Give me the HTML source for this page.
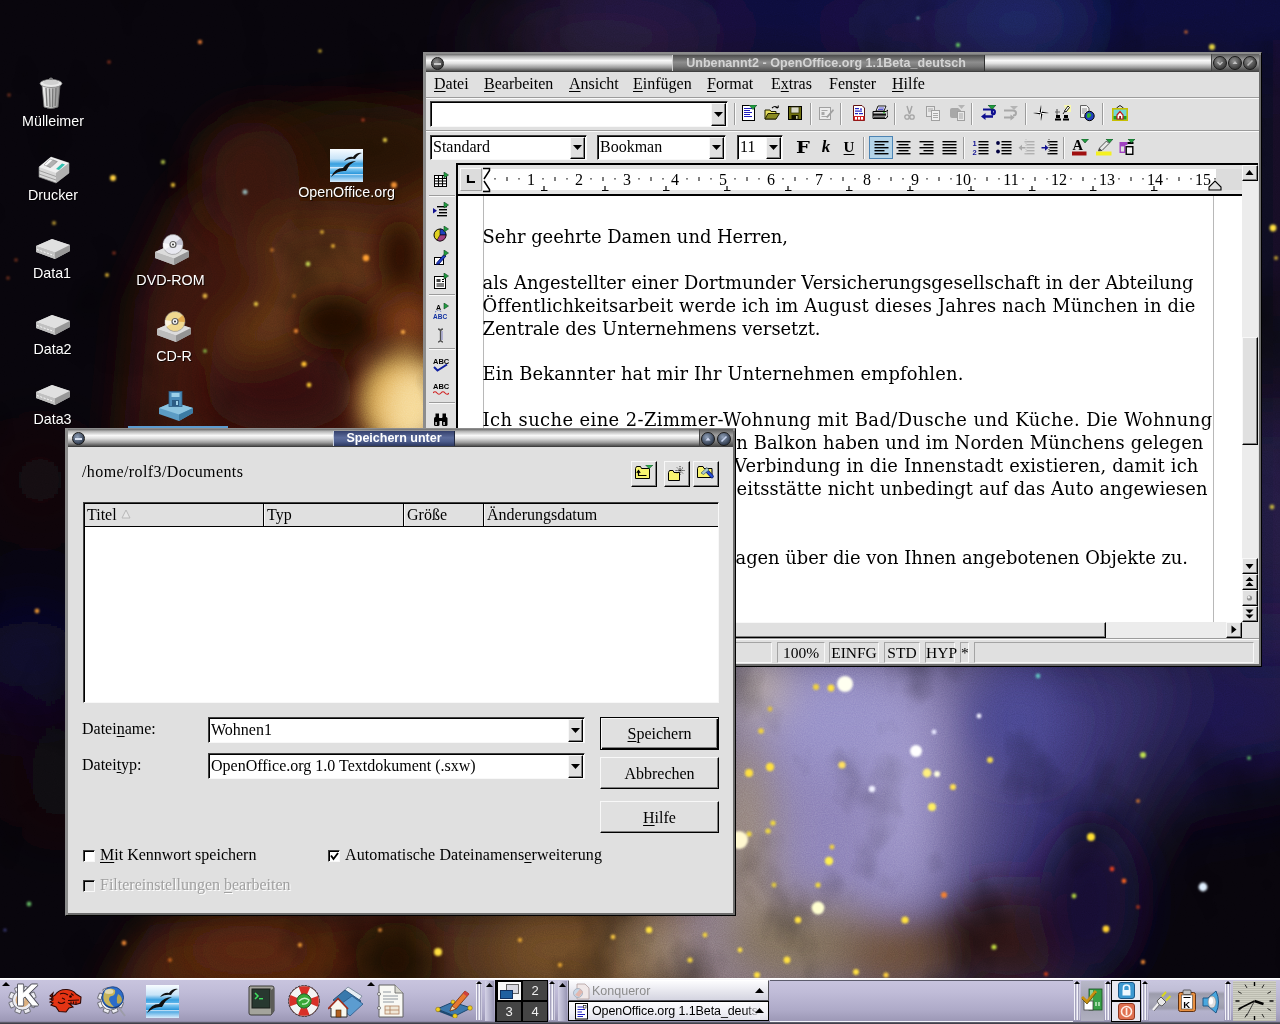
<!DOCTYPE html>
<html lang="de">
<head>
<meta charset="utf-8">
<title>Speichern unter</title>
<style>
*{box-sizing:border-box;margin:0;padding:0}
html,body{width:1280px;height:1024px;overflow:hidden}
body{position:relative;background:#0a0612;font-family:"Liberation Serif",serif;font-size:16px;color:#000}
.abs{position:absolute}
#all{position:absolute;left:0;top:0;width:1280px;height:1024px;overflow:hidden;will-change:transform}
#bg{position:absolute;left:0;top:0;width:1280px;height:1024px;display:block}
.dlabel{position:absolute;color:#fff;font:14.3px "Liberation Sans",sans-serif;white-space:nowrap;text-align:center;transform:translateX(-50%);text-shadow:1px 1px 0 rgba(0,0,0,.7)}
.dicon{position:absolute;display:block}
.win{position:absolute;background:#e0e0e0;border:1px solid;border-color:#8c8c8c #000 #000 #8c8c8c;box-shadow:inset 2px 2px 0 #8c8c8c,inset -2px -2px 0 #6c6c6c}
.tbar{position:absolute;left:2px;right:2px;top:1px;height:18px;background:linear-gradient(#6a6a6a 0,#b8b8b8 14%,#f8f8f8 36%,#e0e0e0 52%,#9a9a9a 76%,#505050 94%,#303030 100%)}
.tbtn{position:absolute;top:2px;width:13px;height:13px;border-radius:50%;background:radial-gradient(circle at 40% 35%,#909090,#444 65%,#202020);border:1px solid #1a1a1a}
.ttitle{position:absolute;top:0;height:18px;font:bold 12.5px "Liberation Sans",sans-serif;color:#fff;text-align:center;line-height:18px;white-space:nowrap}
.sunk{position:absolute;background:#fff;border:1px solid;border-color:#404040 #f8f8f8 #f8f8f8 #404040;box-shadow:inset 1px 1px 0 #000}
.raised{position:absolute;background:#e0e0e0;border:1px solid;border-color:#f8f8f8 #000 #000 #f8f8f8;box-shadow:inset -1px -1px 0 #808080}
.ui{position:absolute;white-space:nowrap;font:16px "Liberation Serif",serif;line-height:18px}
u{text-decoration:underline;text-underline-offset:2px}
.doc{position:absolute;white-space:nowrap;font:17.9px "DejaVu Serif",serif;line-height:23px;color:#000}
.ic{position:absolute;display:block}
</style>
</head>
<body>
<div id="all">
<svg id="bg" width="1280" height="1024" viewBox="0 0 1280 1024">
<defs><filter id="b40" x="-50%" y="-50%" width="200%" height="200%"><feGaussianBlur stdDeviation="40"/></filter><filter id="b22" x="-50%" y="-50%" width="200%" height="200%"><feGaussianBlur stdDeviation="22"/></filter><filter id="b12" x="-50%" y="-50%" width="200%" height="200%"><feGaussianBlur stdDeviation="12"/></filter><filter id="nz" x="0" y="0" width="100%" height="100%"><feTurbulence type="fractalNoise" baseFrequency="0.011 0.008" numOctaves="4" seed="7" result="t"/><feColorMatrix type="matrix" values="0 0 0 0 0.5  0 0 0 0 0.5  0 0 0 0 0.5  1.6 0 0 0 -0.3"/></filter><filter id="nz2" x="0" y="0" width="100%" height="100%"><feTurbulence type="fractalNoise" baseFrequency="0.011 0.008" numOctaves="4" seed="7"/><feColorMatrix type="matrix" values="0 0 0 0 0  0 0 0 0 0  0 0 0 0 0  -2.2 0 0 0 1.0"/></filter><filter id="gr" x="0" y="0" width="100%" height="100%"><feTurbulence type="fractalNoise" baseFrequency="0.9" numOctaves="2" seed="3"/><feColorMatrix type="matrix" values="0 0 0 0 0.5  0 0 0 0 0.5  0 0 0 0 0.5  0 0 0 0.9 -0.25"/></filter><filter id="b1" x="-100%" y="-100%" width="300%" height="300%"><feGaussianBlur stdDeviation="1.3"/></filter></defs>
<rect width="1280" height="1024" fill="#08050c"/>
<g filter="url(#b40)">
<ellipse cx="30" cy="655" rx="60" ry="40" fill="#0c0c44" opacity="1"/>
<ellipse cx="40" cy="480" rx="40" ry="40" fill="#200a0a" opacity="1"/>
<ellipse cx="60" cy="780" rx="40" ry="50" fill="#1c0808" opacity="1"/>
<rect x="560" y="-60" width="800" height="130" fill="#111040"/>
<ellipse cx="600" cy="45" rx="130" ry="26" fill="#3a2648" opacity="1"/>
<ellipse cx="1020" cy="25" rx="60" ry="40" fill="#28307a" opacity="1"/>
<ellipse cx="900" cy="40" rx="80" ry="20" fill="#2a2458" opacity="1"/>
<rect x="1235" y="40" width="90" height="300" fill="#120c2a"/>
<rect x="1235" y="400" width="90" height="300" fill="#2a2052"/>
</g>
<g filter="url(#b22)">
<polygon points="120,470 135,300 180,200 265,135 340,110 470,100 470,470" fill="#3a160a" opacity="1"/>
<polygon points="100,1010 150,925 360,905 470,905 470,1010" fill="#4a220c" opacity="1"/>
<polygon points="430,1010 430,905 800,905 800,1010" fill="#50301a" opacity="1"/>
</g>
<g filter="url(#b22)">
<polygon points="215,335 300,275 470,185 470,250 320,325 240,365" fill="#683a18" opacity="1"/>
<ellipse cx="330" cy="250" rx="80" ry="36" fill="#5a3016" opacity="1"/>
<ellipse cx="330" cy="150" rx="130" ry="50" fill="#1e0c08" opacity="0.7"/>
<ellipse cx="280" cy="390" rx="75" ry="42" fill="#300e08" opacity="1"/>
<ellipse cx="250" cy="180" rx="50" ry="60" fill="#381808" opacity="1"/>
<ellipse cx="395" cy="960" rx="40" ry="40" fill="#1c0a04" opacity="1"/>
<ellipse cx="690" cy="950" rx="100" ry="45" fill="#8e7656" opacity="1"/>
<ellipse cx="560" cy="950" rx="70" ry="40" fill="#6e4c28" opacity="1"/>
<ellipse cx="250" cy="950" rx="70" ry="25" fill="#5a2810" opacity="1"/>
</g>
<g filter="url(#b12)">
<ellipse cx="335" cy="322" rx="38" ry="28" fill="#220a04" opacity="1"/>
<ellipse cx="400" cy="255" rx="22" ry="36" fill="#2c0e05" opacity="1"/>
<ellipse cx="408" cy="322" rx="24" ry="24" fill="#7c3e18" opacity="1"/>
<ellipse cx="404" cy="402" rx="44" ry="48" fill="#e4b458" opacity="1"/>
<ellipse cx="414" cy="410" rx="26" ry="38" fill="#f6da98" opacity="1"/>
</g>
<g filter="url(#b40)">
<polygon points="700,640 1010,640 975,790 945,900 900,1000 700,1000" fill="#8c82b8" opacity="1"/>
<polygon points="975,640 1190,640 1130,800 1060,1000 915,1000 960,800" fill="#3a3474" opacity="1"/>
<polygon points="1190,640 1320,640 1320,770 1160,800" fill="#1a1850" opacity="1"/>
</g>
<g filter="url(#b22)">
<ellipse cx="745" cy="850" rx="30" ry="120" fill="#9a8878" opacity="1"/>
<ellipse cx="760" cy="690" rx="30" ry="30" fill="#c0b098" opacity="1"/>
<ellipse cx="800" cy="945" rx="80" ry="45" fill="#80705c" opacity="1"/>
<ellipse cx="900" cy="955" rx="60" ry="35" fill="#6a4e34" opacity="1"/>
<ellipse cx="905" cy="790" rx="20" ry="110" fill="#a49cd0" opacity="1"/>
<ellipse cx="840" cy="720" rx="70" ry="50" fill="#9690c8" opacity="1"/>
<ellipse cx="1010" cy="940" rx="80" ry="50" fill="#2e1618" opacity="1"/>
<ellipse cx="1090" cy="900" rx="50" ry="80" fill="#181030" opacity="1"/>
<ellipse cx="1020" cy="720" rx="50" ry="50" fill="#4a4690" opacity="1"/>
</g>
<rect width="1280" height="1024" filter="url(#nz2)" opacity=".45"/>
<rect width="1280" height="1024" filter="url(#gr)" style="mix-blend-mode:overlay" opacity=".5"/>
<g filter="url(#b1)">
<circle cx="200" cy="42" r="2.2" fill="#d07030"/>
<circle cx="320" cy="51" r="1.8" fill="#c0a030"/>
<circle cx="109" cy="62" r="1.8" fill="#803020"/>
<circle cx="9" cy="95" r="1.8" fill="#703020"/>
<circle cx="385" cy="140" r="2.2" fill="#d8c040"/>
<circle cx="363" cy="120" r="1.8" fill="#a03820"/>
<circle cx="163" cy="162" r="2.2" fill="#a0b040"/>
<circle cx="113" cy="178" r="3" fill="#ffd040"/>
<circle cx="173" cy="185" r="2.2" fill="#d8b030"/>
<circle cx="245" cy="192" r="2.5" fill="#90b0b0"/>
<circle cx="394" cy="185" r="3" fill="#f09030"/>
<circle cx="54" cy="223" r="2" fill="#b09030"/>
<circle cx="322" cy="232" r="2" fill="#d0a030"/>
<circle cx="333" cy="246" r="2" fill="#e0a830"/>
<circle cx="272" cy="250" r="2" fill="#b06828"/>
<circle cx="366" cy="258" r="3.2" fill="#ffa030"/>
<circle cx="308" cy="264" r="2.4" fill="#c0d050"/>
<circle cx="114" cy="253" r="1.8" fill="#803020"/>
<circle cx="107" cy="275" r="2" fill="#d0a830"/>
<circle cx="205" cy="296" r="2.4" fill="#e0b040"/>
<circle cx="256" cy="304" r="2.2" fill="#e0c040"/>
<circle cx="294" cy="296" r="2" fill="#a06020"/>
<circle cx="296" cy="331" r="2.2" fill="#e08030"/>
<circle cx="403" cy="332" r="2.2" fill="#f0a040"/>
<circle cx="205" cy="351" r="2" fill="#80a840"/>
<circle cx="304" cy="364" r="2.6" fill="#ffc030"/>
<circle cx="309" cy="385" r="2.4" fill="#f0c030"/>
<circle cx="16" cy="260" r="1.8" fill="#703020"/>
<circle cx="8" cy="278" r="1.8" fill="#703020"/>
<circle cx="37" cy="611" r="2.4" fill="#e09030"/>
<circle cx="29" cy="904" r="2.4" fill="#60b060"/>
<circle cx="5" cy="930" r="1.6" fill="#404080"/>
<circle cx="438" cy="952" r="4" fill="#ffe040"/>
<circle cx="649" cy="930" r="3.2" fill="#ffe040"/>
<circle cx="124" cy="943" r="2.4" fill="#e08030"/>
<circle cx="613" cy="937" r="2.4" fill="#f0c040"/>
<circle cx="300" cy="945" r="2.2" fill="#e09030"/>
<circle cx="520" cy="940" r="2.2" fill="#e0a030"/>
<circle cx="560" cy="965" r="2.2" fill="#e0a030"/>
<circle cx="690" cy="960" r="2.6" fill="#f0d040"/>
<circle cx="170" cy="960" r="2" fill="#c06020"/>
<circle cx="380" cy="930" r="2" fill="#d08030"/>
<circle cx="705" cy="935" r="2.4" fill="#f0d040"/>
<circle cx="845" cy="684" r="8" fill="#fffff0"/>
<circle cx="831" cy="688" r="3.4" fill="#ffe040"/>
<circle cx="816" cy="687" r="3" fill="#f0d040"/>
<circle cx="1038" cy="676" r="2.4" fill="#60c0c0"/>
<circle cx="979" cy="716" r="2.4" fill="#f0f0ff"/>
<circle cx="934" cy="732" r="2.4" fill="#e8e8ff"/>
<circle cx="916" cy="751" r="6" fill="#ffffff"/>
<circle cx="927" cy="773" r="4.4" fill="#fff080"/>
<circle cx="937" cy="774" r="3" fill="#ffffe0"/>
<circle cx="990" cy="760" r="3" fill="#f0d850"/>
<circle cx="842" cy="765" r="3.6" fill="#ffe060"/>
<circle cx="770" cy="767" r="4.2" fill="#ffe040"/>
<circle cx="749" cy="773" r="4" fill="#ffe040"/>
<circle cx="761" cy="731" r="2.8" fill="#f0d040"/>
<circle cx="770" cy="709" r="2.4" fill="#e0c040"/>
<circle cx="872" cy="789" r="3.2" fill="#f0f0ff"/>
<circle cx="953" cy="787" r="3" fill="#ffe050"/>
<circle cx="932" cy="807" r="4" fill="#fff060"/>
<circle cx="1143" cy="755" r="3" fill="#c0e050"/>
<circle cx="1249" cy="758" r="2" fill="#50a060"/>
<circle cx="1138" cy="801" r="2" fill="#c07030"/>
<circle cx="1091" cy="837" r="4" fill="#ffe030"/>
<circle cx="1112" cy="869" r="2.4" fill="#e04020"/>
<circle cx="1124" cy="881" r="2.4" fill="#f06020"/>
<circle cx="1203" cy="887" r="4.4" fill="#e0f0ff"/>
<circle cx="1074" cy="896" r="2.4" fill="#b0d040"/>
<circle cx="1106" cy="929" r="3.4" fill="#ffd030"/>
<circle cx="944" cy="895" r="3" fill="#f08030"/>
<circle cx="905" cy="920" r="3.6" fill="#ffe040"/>
<circle cx="818" cy="908" r="6.4" fill="#ffffd0"/>
<circle cx="829" cy="861" r="4.2" fill="#fff050"/>
<circle cx="798" cy="920" r="3.2" fill="#ffe040"/>
<circle cx="787" cy="960" r="3.4" fill="#ffe040"/>
<circle cx="773" cy="823" r="2.6" fill="#f0d840"/>
<circle cx="768" cy="831" r="2.6" fill="#f0d840"/>
<circle cx="749" cy="834" r="2.6" fill="#f0d840"/>
<circle cx="832" cy="847" r="2.4" fill="#f0d040"/>
<circle cx="818" cy="885" r="2.6" fill="#f0d840"/>
<circle cx="774" cy="885" r="2.4" fill="#e0c840"/>
<circle cx="994" cy="947" r="2.6" fill="#c0d840"/>
<circle cx="1143" cy="962" r="2.2" fill="#e08030"/>
<circle cx="1138" cy="907" r="2" fill="#a03020"/>
<circle cx="739" cy="840" r="9" fill="#fff8d0"/>
<circle cx="757" cy="975" r="3" fill="#ffe040"/>
<circle cx="740" cy="950" r="2.4" fill="#ffe040"/>
<circle cx="856" cy="972" r="3" fill="#ffe040"/>
<circle cx="886" cy="975" r="2.6" fill="#ffd040"/>
<circle cx="1046" cy="974" r="2" fill="#d04020"/>
<circle cx="958" cy="45" r="2.2" fill="#60c060"/>
<circle cx="1212" cy="47" r="3" fill="#e0d040"/>
<circle cx="1186" cy="32" r="1.8" fill="#c06030"/>
<circle cx="918" cy="18" r="1.6" fill="#60a0a0"/>
<circle cx="1273" cy="228" r="3.4" fill="#ffe040"/>
<circle cx="1276" cy="258" r="2" fill="#c0a030"/>
<circle cx="1272" cy="507" r="2.4" fill="#c0b040"/>
</g>
</svg>

<svg class="ic" style="left:38px;top:76px" width="26" height="34" viewBox="0 0 26 34"><defs><linearGradient id="tg" x1="0" x2="1"><stop offset="0" stop-color="#f4f4f4"/><stop offset=".5" stop-color="#c4c4c4"/><stop offset="1" stop-color="#8c8c8c"/></linearGradient></defs><path d="M4 9 L6 31 Q13 34 20 31 L22 9 Z" fill="url(#tg)" stroke="#707070" stroke-width=".8"/><path d="M8 12 L9 30 M11.5 12.5 L12 31 M14.8 12.5 L14.5 31 M18 12 L17.2 30" stroke="#787878" stroke-width="1.3"/><ellipse cx="13" cy="7.5" rx="11" ry="4" fill="#e8e8e8" stroke="#808080" stroke-width=".8"/><ellipse cx="13" cy="6.5" rx="8" ry="2.4" fill="#d0d0d0"/><path d="M11 4 Q13 0 15 4" fill="none" stroke="#909090" stroke-width="1.2"/></svg>
<div class="dlabel" style="left:53px;top:112.5px">Mülleimer</div>
<svg class="ic" style="left:37px;top:153px" width="34" height="32" viewBox="0 0 34 32"><path d="M2 14 L14 4 L32 10 L32 20 L19 30 L2 24 Z" fill="#d8d8d8" stroke="#808080" stroke-width=".7"/><path d="M2 14 L19 20 L32 10 L14 4 Z" fill="#f0f0f0"/><path d="M19 20 V30 L32 20 V10 Z" fill="#b0b0b0"/><path d="M2 17.5 L19 23.5 M2 21 L19 27" stroke="#909090" stroke-width=".8"/><path d="M7 12 L13 6 L20 8.5 L14 14.5 Z" fill="#fafafa" stroke="#a0a0a0" stroke-width=".6"/><path d="M9 13 L16 6.5 L21 8.5 L13 15 Z" fill="#808080" opacity=".6"/><path d="M19 16 L25 10.5 L28 11.5 L22 17 Z" fill="#30c0b0"/></svg>
<div class="dlabel" style="left:53px;top:187px">Drucker</div>
<svg class="ic" style="left:35px;top:238px" width="36" height="22" viewBox="0 0 36 22"><path d="M1 8 L17 1 L35 7 L35 13 L20 21 L1 14 Z" fill="#b8b8b8"/><path d="M1 8 L20 14.5 L35 7 L17 1 Z" fill="#e0e0e0"/><path d="M20 14.5 V21 L35 13 V7 Z" fill="#989898"/><path d="M1 8 L20 14.5 V21 L1 14 Z" fill="#c0c0c0"/><path d="M2 11.5 L19 17.5" stroke="#f8f8f8" stroke-width="1" stroke-dasharray="2 1.5"/></svg>
<div class="dlabel" style="left:52px;top:265px">Data1</div>
<svg class="ic" style="left:35px;top:314px" width="36" height="22" viewBox="0 0 36 22"><path d="M1 8 L17 1 L35 7 L35 13 L20 21 L1 14 Z" fill="#b8b8b8"/><path d="M1 8 L20 14.5 L35 7 L17 1 Z" fill="#e0e0e0"/><path d="M20 14.5 V21 L35 13 V7 Z" fill="#989898"/><path d="M1 8 L20 14.5 V21 L1 14 Z" fill="#c0c0c0"/><path d="M2 11.5 L19 17.5" stroke="#f8f8f8" stroke-width="1" stroke-dasharray="2 1.5"/></svg>
<div class="dlabel" style="left:52.5px;top:341px">Data2</div>
<svg class="ic" style="left:35px;top:384px" width="36" height="22" viewBox="0 0 36 22"><path d="M1 8 L17 1 L35 7 L35 13 L20 21 L1 14 Z" fill="#b8b8b8"/><path d="M1 8 L20 14.5 L35 7 L17 1 Z" fill="#e0e0e0"/><path d="M20 14.5 V21 L35 13 V7 Z" fill="#989898"/><path d="M1 8 L20 14.5 V21 L1 14 Z" fill="#c0c0c0"/><path d="M2 11.5 L19 17.5" stroke="#f8f8f8" stroke-width="1" stroke-dasharray="2 1.5"/></svg>
<div class="dlabel" style="left:52.5px;top:410.5px">Data3</div>
<svg class="ic" style="left:154px;top:234px" width="36" height="32" viewBox="0 0 36 32"><path d="M1 18 L17 11 L35 17 L35 23 L20 31 L1 24 Z" fill="#b8b8b8"/><path d="M1 18 L20 24.5 L35 17 L17 11 Z" fill="#dcdcdc"/><path d="M20 24.5 V31 L35 23 V17 Z" fill="#949494"/><path d="M1 18 L20 24.5 V31 L1 24 Z" fill="#bcbcbc"/><ellipse cx="19" cy="10.5" rx="10" ry="10" fill="#e8e8f0" stroke="#909090" stroke-width=".6" transform="rotate(-15 19 10.5)"/><path d="M19 10.5 L27 4 A10 10 0 0 1 29 11 Z" fill="#b8b8c8" opacity=".8"/><path d="M19 10.5 L10 16 A10 10 0 0 1 9 9 Z" fill="#fff" opacity=".7"/><circle cx="19" cy="10.5" r="3" fill="#f8f8f8" stroke="#606060" stroke-width="1.2"/><circle cx="19" cy="10.5" r="1" fill="#303030"/></svg>
<div class="dlabel" style="left:170.5px;top:272px">DVD-ROM</div>
<svg class="ic" style="left:156px;top:311px" width="36" height="32" viewBox="0 0 36 32"><path d="M1 18 L17 11 L35 17 L35 23 L20 31 L1 24 Z" fill="#b8b8b8"/><path d="M1 18 L20 24.5 L35 17 L17 11 Z" fill="#dcdcdc"/><path d="M20 24.5 V31 L35 23 V17 Z" fill="#949494"/><path d="M1 18 L20 24.5 V31 L1 24 Z" fill="#bcbcbc"/><ellipse cx="19" cy="10.5" rx="10" ry="10" fill="#f0d890" stroke="#909090" stroke-width=".6" transform="rotate(-15 19 10.5)"/><path d="M19 10.5 L27 4 A10 10 0 0 1 29 11 Z" fill="#e0a040" opacity=".8"/><path d="M19 10.5 L10 16 A10 10 0 0 1 9 9 Z" fill="#fff" opacity=".7"/><circle cx="19" cy="10.5" r="3" fill="#f8f8f8" stroke="#606060" stroke-width="1.2"/><circle cx="19" cy="10.5" r="1" fill="#303030"/></svg>
<div class="dlabel" style="left:174px;top:348px">CD-R</div>
<svg class="ic" style="left:158px;top:390px" width="36" height="32" viewBox="0 0 36 32"><path d="M1 18 L15 12 L35 18 L35 23 L21 31 L1 24 Z" fill="#5c9cc4"/><path d="M1 18 L21 24.5 L35 18 L15 12 Z" fill="#8cc4e0"/><path d="M21 24.5 V31 L35 23 V18 Z" fill="#3c7ca4"/><rect x="11" y="1.5" width="13" height="15" fill="#4c8cb8" stroke="#2c5c84" stroke-width=".8"/><rect x="13.5" y="3" width="8" height="4" fill="#9cd0e8"/><rect x="14" y="10" width="7" height="6" fill="#2c5c84"/><rect x="18" y="11" width="2" height="4" fill="#9cd0e8"/></svg>
<div class="abs" style="left:128px;top:426px;width:100px;height:3px;background:#5c9cd0"></div>
<svg class="ic" style="left:330px;top:149px" width="33" height="33" viewBox="0 0 33 33"><defs><linearGradient id="og" x1="0" y1="0" x2="0" y2="1"><stop offset="0" stop-color="#f8fcff"/><stop offset=".3" stop-color="#c8e4f8"/><stop offset=".45" stop-color="#38a0e0"/><stop offset=".62" stop-color="#78c4f0"/><stop offset=".75" stop-color="#2c98dc"/><stop offset="1" stop-color="#d8ecfc"/></linearGradient></defs><rect width="33" height="33" fill="url(#og)"/><rect y="18" width="33" height="1.5" fill="#e8f4ff" opacity=".8"/><rect y="25" width="33" height="1.2" fill="#e8f4ff" opacity=".7"/><path d="M14 12 Q18 7 23 8 Q27 3 32 4 Q28 5 25 10 Q20 9 14 12 Z" fill="#101010"/><path d="M1 28 Q5 19 13 19 Q18 12 26 12 Q20 14 16 22 Q8 21 1 28 Z" fill="#101010"/></svg>
<div class="dlabel" style="left:346.5px;top:184px">OpenOffice.org</div>
<div class="win" style="left:423px;top:52px;width:839px;height:615px"></div>
<div class="tbar" style="left:426px;top:54px;width:833px;right:auto"></div>
<div class="tbtn" style="left:431px;top:57px"></div><div class="abs" style="left:434px;top:63px;width:7px;height:2px;background:#c8c8c8"></div>
<div class="ttitle" style="left:672px;top:55px;width:313px;height:16px;line-height:16px;padding-right:5px;letter-spacing:.06px;background:linear-gradient(#4c4c4c,#8e8e8e 45%,#7a7a7a 70%,#505050);color:#d4d4d4;border-left:1px solid #d0d0d0;border-right:1px solid #303030;font-size:12.5px">Unbenannt2 - OpenOffice.org 1.1Beta_deutsch</div>
<div class="abs" style="left:1211px;top:54px;width:48px;height:18px;background:linear-gradient(#5a5a5a,#a0a0a0 35%,#8a8a8a 60%,#404040);border-left:1px solid #444"></div>
<div class="tbtn" style="left:1213px;top:56px;width:14px;height:14px"></div>
<div class="tbtn" style="left:1228px;top:56px;width:14px;height:14px"></div>
<div class="tbtn" style="left:1243px;top:56px;width:14px;height:14px"></div>
<svg class="ic" style="left:1213px;top:56px" width="14" height="14" viewBox="0 0 14 14"><path d="M4.5 6 L7 8.5 L9.5 6" fill="none" stroke="#c0c0c0" stroke-width="1.4"/></svg>
<svg class="ic" style="left:1228px;top:56px" width="14" height="14" viewBox="0 0 14 14"><path d="M4.5 8 L7 5 L9.5 8 Z" fill="#c0c0c0"/></svg>
<svg class="ic" style="left:1243px;top:56px" width="14" height="14" viewBox="0 0 14 14"><path d="M4.5 9.5 L9.5 4.5" fill="none" stroke="#b8b8b8" stroke-width="1.6"/></svg>
<div class="ui" style="left:434px;top:75px"><u>D</u>atei</div>
<div class="ui" style="left:484px;top:75px"><u>B</u>earbeiten</div>
<div class="ui" style="left:569px;top:75px"><u>A</u>nsicht</div>
<div class="ui" style="left:633px;top:75px"><u>E</u>infügen</div>
<div class="ui" style="left:707px;top:75px"><u>F</u>ormat</div>
<div class="ui" style="left:771px;top:75px">E<u>x</u>tras</div>
<div class="ui" style="left:829px;top:75px">Fen<u>s</u>ter</div>
<div class="ui" style="left:892px;top:75px"><u>H</u>ilfe</div>
<div class="abs" style="left:426px;top:97px;width:833px;height:2px;border-top:1px solid #9c9c9c;border-bottom:1px solid #fafafa"></div>
<div class="abs" style="left:426px;top:130px;width:833px;height:2px;border-top:1px solid #9c9c9c;border-bottom:1px solid #fafafa"></div>
<div class="sunk" style="left:430px;top:101px;width:298px;height:26px"></div>
<div class="raised" style="left:711px;top:103px;width:15px;height:23px"></div>
<svg class="ic" style="left:714px;top:112px" width="9" height="5" viewBox="0 0 9 5"><path d="M0 0 H9 L4.5 5 Z" fill="#000"/></svg>
<div class="sunk" style="left:430px;top:135px;width:157px;height:25px"></div>
<div class="raised" style="left:570px;top:137px;width:15px;height:22px"></div>
<svg class="ic" style="left:573px;top:145px" width="9" height="5" viewBox="0 0 9 5"><path d="M0 0 H9 L4.5 5 Z" fill="#000"/></svg>
<div class="ui" style="left:433px;top:138px;font-size:16px">Standard</div>
<div class="sunk" style="left:597px;top:135px;width:129px;height:25px"></div>
<div class="raised" style="left:709px;top:137px;width:15px;height:22px"></div>
<svg class="ic" style="left:712px;top:145px" width="9" height="5" viewBox="0 0 9 5"><path d="M0 0 H9 L4.5 5 Z" fill="#000"/></svg>
<div class="ui" style="left:600px;top:138px;font-size:16px">Bookman</div>
<div class="sunk" style="left:737px;top:135px;width:46px;height:25px"></div>
<div class="raised" style="left:766px;top:137px;width:15px;height:22px"></div>
<svg class="ic" style="left:769px;top:145px" width="9" height="5" viewBox="0 0 9 5"><path d="M0 0 H9 L4.5 5 Z" fill="#000"/></svg>
<div class="ui" style="left:740px;top:138px;font-size:16px">11</div>
<div class="abs" style="left:734px;top:103px;width:2px;height:22px;border-left:1px solid #9c9c9c;border-right:1px solid #fafafa"></div>
<div class="abs" style="left:810px;top:103px;width:2px;height:22px;border-left:1px solid #9c9c9c;border-right:1px solid #fafafa"></div>
<div class="abs" style="left:840px;top:103px;width:2px;height:22px;border-left:1px solid #9c9c9c;border-right:1px solid #fafafa"></div>
<div class="abs" style="left:894px;top:103px;width:2px;height:22px;border-left:1px solid #9c9c9c;border-right:1px solid #fafafa"></div>
<div class="abs" style="left:971px;top:103px;width:2px;height:22px;border-left:1px solid #9c9c9c;border-right:1px solid #fafafa"></div>
<div class="abs" style="left:1025px;top:103px;width:2px;height:22px;border-left:1px solid #9c9c9c;border-right:1px solid #fafafa"></div>
<div class="abs" style="left:1102px;top:103px;width:2px;height:22px;border-left:1px solid #9c9c9c;border-right:1px solid #fafafa"></div>
<div class="abs" style="left:863px;top:137px;width:2px;height:22px;border-left:1px solid #9c9c9c;border-right:1px solid #fafafa"></div>
<div class="abs" style="left:963px;top:137px;width:2px;height:22px;border-left:1px solid #9c9c9c;border-right:1px solid #fafafa"></div>
<div class="abs" style="left:1063px;top:137px;width:2px;height:22px;border-left:1px solid #9c9c9c;border-right:1px solid #fafafa"></div>
<svg class="ic" style="left:741px;top:105px" width="16" height="17" viewBox="0 0 16 17"><rect x="1.5" y="0.5" width="12" height="15" fill="#fff" stroke="#000"/><rect x="3" y="3" width="8" height="1" fill="#2020c0"/><rect x="3" y="5" width="6" height="1" fill="#2020c0"/><rect x="3" y="7" width="8" height="1" fill="#2020c0"/><rect x="3" y="9" width="6" height="1" fill="#2020c0"/><rect x="3" y="11" width="8" height="1" fill="#2020c0"/><path d="M8 0 H16 L12 4.5 Z" fill="#20a040" stroke="#104020" stroke-width=".6"/></svg>
<svg class="ic" style="left:764px;top:105px" width="16" height="17" viewBox="0 0 16 17"><path d="M1 5 H6 L7 6.5 H12 V14 H1 Z" fill="#e8e060" stroke="#202000" stroke-width="1"/><path d="M1 14 L4 8.5 H15.5 L12 14 Z" fill="#8a8a20" stroke="#202000"/><path d="M8 3 Q11 0 14 3 M14 3 l-2.5 -.5 M14 3 l.3 -2.5" fill="none" stroke="#000" stroke-width="1.1"/></svg>
<svg class="ic" style="left:787px;top:105px" width="16" height="17" viewBox="0 0 16 17"><rect x="1.5" y="1.5" width="13" height="13" fill="#707010" stroke="#000"/><rect x="4" y="2" width="8" height="6" fill="#d8d8c8" stroke="#303000" stroke-width=".7"/><rect x="4.5" y="10" width="7" height="4.5" fill="#101000"/><rect x="9" y="11" width="1.6" height="2.8" fill="#d0d0a0"/></svg>
<svg class="ic" style="left:818px;top:105px" width="16" height="17" viewBox="0 0 16 17"><rect x="1.5" y="2.5" width="11" height="12" fill="#ececec" stroke="#a0a0a0"/><rect x="3.5" y="5" width="6" height="1" fill="#a8a8a8"/><rect x="3.5" y="7" width="3" height="3" fill="#a8a8a8"/><rect x="3.5" y="11" width="6" height="1" fill="#a8a8a8"/><path d="M8 12 L15 4 L16 5.5 L9.5 13 Z" fill="#a0a0a0"/></svg>
<svg class="ic" style="left:851px;top:105px" width="16" height="17" viewBox="0 0 16 17"><path d="M2.5 .5 H11 L13.5 3 V15.5 H2.5 Z" fill="#fff" stroke="#601010"/><rect x="2.5" y="11" width="11" height="4.5" fill="#d02020"/><rect x="4" y="3" width="4" height="1.2" fill="#2020c0"/><rect x="9" y="3.5" width="2" height="1.2" fill="#2020c0"/><rect x="4" y="5.5" width="7" height="1.2" fill="#2020c0"/><rect x="4" y="8" width="3" height="1.2" fill="#2020c0"/><rect x="8" y="8" width="4" height="1.2" fill="#2020c0"/><rect x="4" y="12" width="2" height="2.6" fill="#fff"/><rect x="7" y="12" width="2" height="2.6" fill="#fff"/><rect x="10" y="12" width="2" height="2.6" fill="#fff"/></svg>
<svg class="ic" style="left:872px;top:105px" width="16" height="17" viewBox="0 0 16 17"><path d="M4 6 L6 1 H14 L12 6 Z" fill="#fff" stroke="#000" stroke-width=".9"/><path d="M6.5 3 H12 M6 4.6 H11.5" stroke="#3030c0" stroke-width=".9"/><path d="M1 6.5 H14 L16 5 V11 L14 13.5 H1 Z" fill="#d0d0d0" stroke="#000"/><rect x="1" y="8.5" width="13" height="2.2" fill="#101010"/><rect x="2" y="11.5" width="11" height="1.6" fill="#404040"/><circle cx="12" cy="7.6" r=".8" fill="#20c020"/></svg>
<svg class="ic" style="left:901px;top:105px" width="16" height="17" viewBox="0 0 16 17"><path d="M6 1 L8.5 9 M11 1 L8.5 9" stroke="#a4a4a4" stroke-width="1.4" fill="none"/><circle cx="6" cy="12" r="2.2" fill="none" stroke="#a4a4a4" stroke-width="1.3"/><circle cx="11" cy="12" r="2.2" fill="none" stroke="#a4a4a4" stroke-width="1.3"/></svg>
<svg class="ic" style="left:925px;top:105px" width="16" height="17" viewBox="0 0 16 17"><rect x="1.5" y="1.5" width="8" height="10" fill="#e8e8e8" stroke="#a0a0a0"/><rect x="6.5" y="5.5" width="8" height="10" fill="#f0f0f0" stroke="#a0a0a0"/><path d="M3 4 H8 M3 6 H6 M8 8.5 H13 M8 10.5 H13 M8 12.5 H13" stroke="#a8a8a8"/></svg>
<svg class="ic" style="left:949px;top:105px" width="16" height="17" viewBox="0 0 16 17"><path d="M1 5 Q1 3 3 3 H9 L12 5.5 V13 H3 Q1 13 1 11 Z" fill="#a8a8a8"/><rect x="8.5" y="6.5" width="7" height="9" fill="#e8e8e8" stroke="#a0a0a0"/><path d="M10 9 H14 M10 11 H14 M10 13 H14" stroke="#a8a8a8"/><path d="M9 0 H16 L12.5 4 Z" fill="#b4b4b4"/></svg>
<svg class="ic" style="left:980px;top:105px" width="16" height="17" viewBox="0 0 16 17"><path d="M3 4.5 H12 V8.5 H15 M3 4.5 H11" fill="none" stroke="#101090" stroke-width="2.2"/><path d="M12 4.5 Q15 4.5 15 7 Q15 9.5 12 9.5" fill="none" stroke="#101090" stroke-width="2"/><path d="M1 11.5 L5.5 8 V10.3 H13 V12.7 H5.5 V15 Z" fill="#101090"/><path d="M8 0 H16 L12 4.5 Z" fill="#20a040" stroke="#104020" stroke-width=".6"/></svg>
<svg class="ic" style="left:1002px;top:105px" width="16" height="17" viewBox="0 0 16 17"><path d="M2 5.5 H11 Q14 5.5 14 8 Q14 10.5 11 10.5" fill="none" stroke="#a8a8a8" stroke-width="2"/><path d="M12.5 12.5 L8.5 9.5 V11.5 H2 V13.5 H8.5 V15.5 Z" fill="#a8a8a8"/><path d="M8 1 H16 L12 5 Z" fill="#b4b4b4"/></svg>
<svg class="ic" style="left:1033px;top:105px" width="16" height="17" viewBox="0 0 16 17"><path d="M8 0 L9.3 6.7 L16 8 L9.3 9.3 L8 16 L6.7 9.3 L0 8 L6.7 6.7 Z" fill="#000"/><path d="M8 0 L8 8 L9.3 6.7Z M16 8 L8 8 L9.3 9.3Z M8 16 L8 8 L6.7 9.3Z M0 8 L8 8 L6.7 6.7Z" fill="#fff"/></svg>
<svg class="ic" style="left:1055px;top:105px" width="16" height="17" viewBox="0 0 16 17"><path d="M9 0 H16 V7 H11 Z" fill="#f8f8b0"/><path d="M9.5 6 L13 1 L14.5 2.5 L11 7 Z M8 9 L10 6" fill="#fff" stroke="#000" stroke-width=".9"/><path d="M2 4 V10 M-1 7 H5" stroke="#606060" stroke-width="1.2"/><rect x="1" y="10" width="4" height="3" fill="#000"/><rect x="0" y="13.5" width="6" height="2" fill="#000"/><rect x="9" y="10" width="4" height="3" fill="#000"/><rect x="8" y="13.5" width="6" height="2" fill="#000"/></svg>
<svg class="ic" style="left:1079px;top:105px" width="16" height="17" viewBox="0 0 16 17"><path d="M1.5 .5 H7.5 L10 3 V12.5 H1.5 Z" fill="#f4f4f4" stroke="#606060"/><path d="M3 4 H8 M3 6 H8 M3 8 H6" stroke="#909090"/><circle cx="10.5" cy="11" r="4.7" fill="#2040c0" stroke="#000"/><path d="M8 9 Q10 7 12 9 Q13 11 11 12 Q9 14 8 12 Z" fill="#30b030"/></svg>
<svg class="ic" style="left:1112px;top:105px" width="16" height="17" viewBox="0 0 16 17"><path d="M4.5 3 L8 .5 L11.5 3" fill="none" stroke="#000" stroke-width=".9"/><rect x=".8" y="3.8" width="14.4" height="11.4" fill="#70d8d8" stroke="#c8c000" stroke-width="1.6"/><rect x="1.6" y="11" width="12.8" height="3.4" fill="#20a020"/><path d="M5 10 L8 6.5 L11 10 V14 H5 Z" fill="#fff" stroke="#c02020" stroke-width="1.2"/><rect x="7.2" y="11" width="1.8" height="3" fill="#802020"/></svg>
<div class="abs" style="left:795px;top:137px;width:16px;font:900 17px 'DejaVu Serif',serif;line-height:20px;text-align:center;transform:scaleX(1.15)">F</div>
<div class="abs" style="left:818px;top:137px;width:16px;font:italic bold 17px 'Liberation Serif',serif;line-height:20px;text-align:center">k</div>
<div class="abs" style="left:841px;top:137px;width:16px;font:bold 15px 'Liberation Serif',serif;line-height:20px;text-align:center;text-decoration:underline;text-underline-offset:2px">U</div>
<div class="abs" style="left:869px;top:136px;width:24px;height:23px;background:#b4d4e8;border:1px solid #4c84b4"></div>
<svg class="ic" style="left:873px;top:139px" width="17" height="17" viewBox="-0.5 0 17 17"><rect x="1" y="2" width="14" height="1.4" fill="#000"/><rect x="1" y="5" width="10" height="1.4" fill="#000"/><rect x="1" y="8" width="14" height="1.4" fill="#000"/><rect x="1" y="11" width="10" height="1.4" fill="#000"/><rect x="1" y="14" width="14" height="1.4" fill="#000"/></svg>
<svg class="ic" style="left:895px;top:139px" width="17" height="17" viewBox="-0.5 0 17 17"><rect x="1" y="2" width="14" height="1.4" fill="#000"/><rect x="3" y="5" width="10" height="1.4" fill="#000"/><rect x="1" y="8" width="14" height="1.4" fill="#000"/><rect x="3" y="11" width="10" height="1.4" fill="#000"/><rect x="1" y="14" width="14" height="1.4" fill="#000"/></svg>
<svg class="ic" style="left:918px;top:139px" width="17" height="17" viewBox="-0.5 0 17 17"><rect x="1" y="2" width="14" height="1.4" fill="#000"/><rect x="5" y="5" width="10" height="1.4" fill="#000"/><rect x="1" y="8" width="14" height="1.4" fill="#000"/><rect x="5" y="11" width="10" height="1.4" fill="#000"/><rect x="1" y="14" width="14" height="1.4" fill="#000"/></svg>
<svg class="ic" style="left:941px;top:139px" width="17" height="17" viewBox="-0.5 0 17 17"><rect x="1" y="2" width="14" height="1.4" fill="#000"/><rect x="1" y="5" width="14" height="1.4" fill="#000"/><rect x="1" y="8" width="14" height="1.4" fill="#000"/><rect x="1" y="11" width="14" height="1.4" fill="#000"/><rect x="1" y="14" width="14" height="1.4" fill="#000"/></svg>
<svg class="ic" style="left:972px;top:139px" width="17" height="17" viewBox="-0.5 0 17 17"><rect x="6" y="2" width="10" height="1.4" fill="#000"/><rect x="6" y="5" width="10" height="1.4" fill="#000"/><rect x="6" y="8" width="10" height="1.4" fill="#000"/><rect x="6" y="11" width="10" height="1.4" fill="#000"/><rect x="6" y="14" width="10" height="1.4" fill="#000"/><text x="0" y="7" font-family="Liberation Sans" font-weight="bold" font-size="7.5" fill="#101090">1</text><text x="0" y="15.5" font-family="Liberation Sans" font-weight="bold" font-size="7.5" fill="#101090">2</text></svg>
<svg class="ic" style="left:995px;top:139px" width="17" height="17" viewBox="-0.5 0 17 17"><rect x="6" y="2" width="10" height="1.4" fill="#000"/><rect x="6" y="5" width="10" height="1.4" fill="#000"/><rect x="6" y="8" width="10" height="1.4" fill="#000"/><rect x="6" y="11" width="10" height="1.4" fill="#000"/><rect x="6" y="14" width="10" height="1.4" fill="#000"/><circle cx="2.5" cy="4" r="1.9" fill="#000040"/><circle cx="2.5" cy="12.5" r="1.9" fill="#000040"/></svg>
<svg class="ic" style="left:1018px;top:139px" width="17" height="17" viewBox="-0.5 0 17 17"><rect x="6" y="2" width="10" height="1.4" fill="#b0b0b0"/><rect x="8" y="5" width="8" height="1.4" fill="#b0b0b0"/><rect x="8" y="8" width="8" height="1.4" fill="#b0b0b0"/><rect x="8" y="11" width="8" height="1.4" fill="#b0b0b0"/><rect x="6" y="14" width="10" height="1.4" fill="#b0b0b0"/><path d="M0 8.7 L3.5 5.7 V7.9 H7 V9.5 H3.5 V11.7 Z" fill="#a8a8a8"/><path d="M7.5 0 V16" stroke="#c0c0c0" stroke-dasharray="1 1"/></svg>
<svg class="ic" style="left:1041px;top:139px" width="17" height="17" viewBox="-0.5 0 17 17"><rect x="6" y="2" width="10" height="1.4" fill="#000"/><rect x="8" y="5" width="8" height="1.4" fill="#000"/><rect x="8" y="8" width="8" height="1.4" fill="#000"/><rect x="8" y="11" width="8" height="1.4" fill="#000"/><rect x="6" y="14" width="10" height="1.4" fill="#000"/><path d="M7 8.7 L3.5 5.7 V7.9 H0 V9.5 H3.5 V11.7 Z" fill="#101090"/><path d="M7.5 0 V16" stroke="#404040" stroke-dasharray="1 1"/></svg>
<svg class="ic" style="left:1072px;top:139px" width="17" height="17" viewBox="-0.5 0 17 17"><text x="0" y="11" font-family="Liberation Serif" font-weight="bold" font-size="14.5" fill="#000">A</text><rect x="-1" y="12.5" width="15" height="4" fill="#a01010"/><path d="M9 0 H16 L12.5 4 Z" fill="#20a040" stroke="#104020" stroke-width=".6"/></svg>
<svg class="ic" style="left:1096px;top:139px" width="17" height="17" viewBox="-0.5 0 17 17"><path d="M3 9 L10 2 L12.5 4.5 L5.5 11.5 L2 12 Z" fill="#e8e8e8" stroke="#404040" stroke-width=".9"/><path d="M3 9 L5.5 11.5 L2 12Z" fill="#404040"/><rect x="-1" y="12.5" width="16" height="4" fill="#f4f020"/><path d="M9.5 0 H16.5 L13 4 Z" fill="#20a040" stroke="#104020" stroke-width=".6"/></svg>
<svg class="ic" style="left:1118px;top:139px" width="17" height="17" viewBox="-0.5 0 17 17"><rect x="1" y="3" width="8" height="3" fill="#a040c0"/><rect x="1.7" y="6.7" width="4.6" height="6.6" fill="#e0e0e0" stroke="#a040c0" stroke-width="1.4"/><rect x="7.7" y="7.7" width="6.6" height="7.6" fill="#f4f4f4" stroke="#000" stroke-width="1.4"/><rect x="9" y="3" width="6" height="2" fill="#000"/><path d="M9.5 0 H16.5 L13 4 Z" fill="#20a040" stroke="#104020" stroke-width=".6"/></svg>
<div class="abs" style="left:429px;top:195px;width:26px;height:2px;border-top:1px solid #9c9c9c;border-bottom:1px solid #fafafa"></div>
<div class="abs" style="left:429px;top:294px;width:26px;height:2px;border-top:1px solid #9c9c9c;border-bottom:1px solid #fafafa"></div>
<div class="abs" style="left:429px;top:348px;width:26px;height:2px;border-top:1px solid #9c9c9c;border-bottom:1px solid #fafafa"></div>
<div class="abs" style="left:429px;top:402px;width:26px;height:2px;border-top:1px solid #9c9c9c;border-bottom:1px solid #fafafa"></div>
<svg class="ic" style="left:433px;top:172px" width="16" height="17" viewBox="0 0 16 17"><rect x="1.5" y="3.5" width="12" height="11" fill="#fff" stroke="#000"/><path d="M1.5 6.5 H13.5 M1.5 9 H13.5 M1.5 11.7 H13.5 M5.5 3.5 V14.5 M9.5 3.5 V14.5" stroke="#000" stroke-width="1.1"/><path d="M11 0 L15.5 3 L11 6 Z" fill="#20a040" stroke="#104020" stroke-width=".6"/></svg>
<svg class="ic" style="left:433px;top:202px" width="16" height="17" viewBox="0 0 16 17"><rect x="4" y="4" width="10" height="1.4" fill="#000"/><rect x="6" y="7" width="8" height="1.4" fill="#000"/><rect x="6" y="10" width="8" height="1.4" fill="#000"/><rect x="4" y="13" width="10" height="1.4" fill="#000"/><path d="M0 6 L4 8.7 L0 11.5 Z" fill="#101090"/><path d="M11 0 L15.5 3 L11 6 Z" fill="#20a040" stroke="#104020" stroke-width=".6"/></svg>
<svg class="ic" style="left:433px;top:226px" width="16" height="17" viewBox="0 0 16 17"><circle cx="7" cy="9" r="6" fill="#e0d020" stroke="#000"/><path d="M7 9 L7 3 A6 6 0 0 1 13 9 Z" fill="#2040c0" stroke="#000" stroke-width=".6"/><path d="M7 9 L13 9 A6 6 0 0 1 4 14.2 Z" fill="#a04080" stroke="#000" stroke-width=".6"/><path d="M11 0 L15.5 3 L11 6 Z" fill="#20a040" stroke="#104020" stroke-width=".6"/></svg>
<svg class="ic" style="left:433px;top:250px" width="16" height="17" viewBox="0 0 16 17"><rect x="1.5" y="7.5" width="9" height="7" fill="#fff" stroke="#000"/><path d="M4 12.5 L11 4.5 L13 6 L6 14 L3.5 14.5 Z" fill="#2040c0" stroke="#000060" stroke-width=".8"/><path d="M11 0 L15.5 3 L11 6 Z" fill="#20a040" stroke="#104020" stroke-width=".6"/></svg>
<svg class="ic" style="left:433px;top:273px" width="16" height="17" viewBox="0 0 16 17"><rect x="1.5" y="3.5" width="11" height="12" fill="#fff" stroke="#000"/><rect x="3.5" y="6" width="4" height="3" fill="#404040"/><path d="M9 6.5 H11 M9 8.5 H11 M3.5 11 H11 M3.5 13 H11" stroke="#000"/><path d="M11 0 L15.5 3 L11 6 Z" fill="#20a040" stroke="#104020" stroke-width=".6"/></svg>
<svg class="ic" style="left:433px;top:303px" width="16" height="17" viewBox="0 0 16 17"><text x="3" y="7" font-family="Liberation Sans" font-weight="bold" font-size="7" fill="#000">A</text><text x="0" y="15.5" font-family="Liberation Sans" font-weight="bold" font-size="6.5" fill="#1030a0">ABC</text><path d="M2 9 L5.5 7 L9 9" fill="none" stroke="#1030a0" stroke-width=".7" stroke-dasharray="1 1"/><path d="M11 0 L15.5 3 L11 6 Z" fill="#20a040" stroke="#104020" stroke-width=".6"/></svg>
<svg class="ic" style="left:433px;top:327px" width="16" height="17" viewBox="0 0 16 17"><path d="M5 2 Q7 2 7.5 4 Q8 2 10 2 M5 15 Q7 15 7.5 13 Q8 15 10 15 M7.5 4 V13" fill="none" stroke="#505050" stroke-width="1.3"/><path d="M9 4 V13" stroke="#8080c0" stroke-width="1"/></svg>
<svg class="ic" style="left:433px;top:356px" width="16" height="17" viewBox="0 0 16 17"><text x="0" y="7.5" font-family="Liberation Sans" font-weight="bold" font-size="7.5" fill="#000">ABC</text><path d="M1 11 L4.5 14.5 L14 8.5" fill="none" stroke="#1020a0" stroke-width="2"/></svg>
<svg class="ic" style="left:433px;top:380px" width="16" height="17" viewBox="0 0 16 17"><text x="0" y="8.5" font-family="Liberation Sans" font-weight="bold" font-size="7.5" fill="#000">ABC</text><path d="M0 13 Q2 10.5 4 13 T8 13 T12 13 T16 13" fill="none" stroke="#d02020" stroke-width="1.2"/></svg>
<svg class="ic" style="left:433px;top:411px" width="16" height="17" viewBox="0 0 16 17"><rect x="1" y="6" width="5.5" height="9" rx="1.5" fill="#000"/><rect x="9" y="6" width="5.5" height="9" rx="1.5" fill="#000"/><rect x="2.5" y="2.5" width="3.5" height="5" fill="#000"/><rect x="9.5" y="2.5" width="3.5" height="5" fill="#000"/><rect x="6" y="7" width="4" height="3" fill="#000"/><rect x="2.3" y="11" width="1.6" height="3" fill="#c0c0c0"/><rect x="10.3" y="11" width="1.6" height="3" fill="#c0c0c0"/></svg>
<div class="abs" style="left:456px;top:163px;width:802px;height:2px;background:#000"></div>
<div class="abs" style="left:456px;top:165px;width:2px;height:457px;background:#000"></div>
<div class="abs" style="left:458px;top:165px;width:784px;height:29px;background:#e4e4e4"></div>
<div class="abs" style="left:458px;top:194px;width:784px;height:2px;background:#000"></div>
<div class="abs" style="left:483px;top:169px;width:733px;height:21px;background:#fff"></div>
<div class="abs" style="left:1216px;top:169px;width:26px;height:21px;background:#dcdcdc"></div>
<div class="abs" style="left:460px;top:168px;width:22px;height:23px;background:#dcdcdc;border:1px solid;border-color:#f8f8f8 #a0a0a0 #a0a0a0 #f8f8f8"></div>
<svg class="ic" style="left:466px;top:173px" width="10" height="12" viewBox="0 0 10 12"><path d="M2 2 V9 H9" fill="none" stroke="#000" stroke-width="2.2"/></svg>
<svg class="ic" style="left:482px;top:167px" width="10" height="26" viewBox="0 0 10 26"><path d="M1 1.5 H7.5 V3.5 L2 12 M1 24.5 H7.5 V22.5 L2 14" fill="none" stroke="#000" stroke-width="1.5"/></svg>
<svg class="ic" style="left:1208px;top:180px" width="14" height="11" viewBox="0 0 14 11"><path d="M1 10 V7 L7 1 L13 7 V10 Z" fill="#e0e0e0" stroke="#000" stroke-width="1.1"/></svg>
<div class="abs" style="left:525.5px;top:170px;width:11px;text-align:center;font:16px 'Liberation Serif',serif;line-height:20px">1</div>
<div class="abs" style="left:573.5px;top:170px;width:11px;text-align:center;font:16px 'Liberation Serif',serif;line-height:20px">2</div>
<div class="abs" style="left:621.5px;top:170px;width:11px;text-align:center;font:16px 'Liberation Serif',serif;line-height:20px">3</div>
<div class="abs" style="left:669.5px;top:170px;width:11px;text-align:center;font:16px 'Liberation Serif',serif;line-height:20px">4</div>
<div class="abs" style="left:717.5px;top:170px;width:11px;text-align:center;font:16px 'Liberation Serif',serif;line-height:20px">5</div>
<div class="abs" style="left:765.5px;top:170px;width:11px;text-align:center;font:16px 'Liberation Serif',serif;line-height:20px">6</div>
<div class="abs" style="left:813.5px;top:170px;width:11px;text-align:center;font:16px 'Liberation Serif',serif;line-height:20px">7</div>
<div class="abs" style="left:861.5px;top:170px;width:11px;text-align:center;font:16px 'Liberation Serif',serif;line-height:20px">8</div>
<div class="abs" style="left:909.5px;top:170px;width:11px;text-align:center;font:16px 'Liberation Serif',serif;line-height:20px">9</div>
<div class="abs" style="left:953.0px;top:170px;width:20px;text-align:center;font:16px 'Liberation Serif',serif;line-height:20px">10</div>
<div class="abs" style="left:1001.0px;top:170px;width:20px;text-align:center;font:16px 'Liberation Serif',serif;line-height:20px">11</div>
<div class="abs" style="left:1049.0px;top:170px;width:20px;text-align:center;font:16px 'Liberation Serif',serif;line-height:20px">12</div>
<div class="abs" style="left:1097.0px;top:170px;width:20px;text-align:center;font:16px 'Liberation Serif',serif;line-height:20px">13</div>
<div class="abs" style="left:1145.0px;top:170px;width:20px;text-align:center;font:16px 'Liberation Serif',serif;line-height:20px">14</div>
<div class="abs" style="left:1193.0px;top:170px;width:20px;text-align:center;font:16px 'Liberation Serif',serif;line-height:20px">15</div>
<svg class="ic" style="left:0;top:0" width="1280" height="200" viewBox="0 0 1280 200"><rect x="494.5" y="178" width="1" height="1.6" fill="#000"/><rect x="506.5" y="177" width="1" height="4" fill="#000"/><rect x="518.5" y="178" width="1" height="1.6" fill="#000"/><rect x="542.5" y="178" width="1" height="1.6" fill="#000"/><rect x="554.5" y="177" width="1" height="4" fill="#000"/><rect x="566.5" y="178" width="1" height="1.6" fill="#000"/><rect x="590.5" y="178" width="1" height="1.6" fill="#000"/><rect x="602.5" y="177" width="1" height="4" fill="#000"/><rect x="614.5" y="178" width="1" height="1.6" fill="#000"/><rect x="638.5" y="178" width="1" height="1.6" fill="#000"/><rect x="650.5" y="177" width="1" height="4" fill="#000"/><rect x="662.5" y="178" width="1" height="1.6" fill="#000"/><rect x="686.5" y="178" width="1" height="1.6" fill="#000"/><rect x="698.5" y="177" width="1" height="4" fill="#000"/><rect x="710.5" y="178" width="1" height="1.6" fill="#000"/><rect x="734.5" y="178" width="1" height="1.6" fill="#000"/><rect x="746.5" y="177" width="1" height="4" fill="#000"/><rect x="758.5" y="178" width="1" height="1.6" fill="#000"/><rect x="782.5" y="178" width="1" height="1.6" fill="#000"/><rect x="794.5" y="177" width="1" height="4" fill="#000"/><rect x="806.5" y="178" width="1" height="1.6" fill="#000"/><rect x="830.5" y="178" width="1" height="1.6" fill="#000"/><rect x="842.5" y="177" width="1" height="4" fill="#000"/><rect x="854.5" y="178" width="1" height="1.6" fill="#000"/><rect x="878.5" y="178" width="1" height="1.6" fill="#000"/><rect x="890.5" y="177" width="1" height="4" fill="#000"/><rect x="902.5" y="178" width="1" height="1.6" fill="#000"/><rect x="926.5" y="178" width="1" height="1.6" fill="#000"/><rect x="938.5" y="177" width="1" height="4" fill="#000"/><rect x="950.5" y="178" width="1" height="1.6" fill="#000"/><rect x="974.5" y="178" width="1" height="1.6" fill="#000"/><rect x="986.5" y="177" width="1" height="4" fill="#000"/><rect x="998.5" y="178" width="1" height="1.6" fill="#000"/><rect x="1022.5" y="178" width="1" height="1.6" fill="#000"/><rect x="1034.5" y="177" width="1" height="4" fill="#000"/><rect x="1046.5" y="178" width="1" height="1.6" fill="#000"/><rect x="1070.5" y="178" width="1" height="1.6" fill="#000"/><rect x="1082.5" y="177" width="1" height="4" fill="#000"/><rect x="1094.5" y="178" width="1" height="1.6" fill="#000"/><rect x="1118.5" y="178" width="1" height="1.6" fill="#000"/><rect x="1130.5" y="177" width="1" height="4" fill="#000"/><rect x="1142.5" y="178" width="1" height="1.6" fill="#000"/><rect x="1166.5" y="178" width="1" height="1.6" fill="#000"/><rect x="1178.5" y="177" width="1" height="4" fill="#000"/><rect x="1190.5" y="178" width="1" height="1.6" fill="#000"/><rect x="1214.5" y="178" width="1" height="1.6" fill="#000"/><path d="M544 186 V190.5 M541 190.5 H547.5" stroke="#000" stroke-width="1.2" fill="none"/><path d="M605 186 V190.5 M602 190.5 H608.5" stroke="#000" stroke-width="1.2" fill="none"/><path d="M666 186 V190.5 M663 190.5 H669.5" stroke="#000" stroke-width="1.2" fill="none"/><path d="M727 186 V190.5 M724 190.5 H730.5" stroke="#000" stroke-width="1.2" fill="none"/><path d="M788 186 V190.5 M785 190.5 H791.5" stroke="#000" stroke-width="1.2" fill="none"/><path d="M849 186 V190.5 M846 190.5 H852.5" stroke="#000" stroke-width="1.2" fill="none"/><path d="M910 186 V190.5 M907 190.5 H913.5" stroke="#000" stroke-width="1.2" fill="none"/><path d="M971 186 V190.5 M968 190.5 H974.5" stroke="#000" stroke-width="1.2" fill="none"/><path d="M1032 186 V190.5 M1029 190.5 H1035.5" stroke="#000" stroke-width="1.2" fill="none"/><path d="M1093 186 V190.5 M1090 190.5 H1096.5" stroke="#000" stroke-width="1.2" fill="none"/><path d="M1154 186 V190.5 M1151 190.5 H1157.5" stroke="#000" stroke-width="1.2" fill="none"/></svg>
<div class="abs" style="left:458px;top:196px;width:784px;height:426px;background:#fff"></div>
<div class="abs" style="left:483px;top:196px;width:1px;height:426px;background:#b8b8b8"></div>
<div class="abs" style="left:1213px;top:196px;width:1px;height:426px;background:#b8b8b8"></div>
<div class="doc" style="left:482.6px;top:224.8px;letter-spacing:-0.014px">Sehr geehrte Damen und Herren,</div>
<div class="doc" style="left:482.6px;top:270.6px;letter-spacing:0.024px">als Angestellter einer Dortmunder Versicherungsgesellschaft in der Abteilung</div>
<div class="doc" style="left:482.6px;top:293.6px;letter-spacing:0.131px">Öffentlichkeitsarbeit werde ich im August dieses Jahres nach München in die</div>
<div class="doc" style="left:482.6px;top:316.5px;letter-spacing:-0.028px">Zentrale des Unternehmens versetzt.</div>
<div class="doc" style="left:482.6px;top:362.3px;letter-spacing:0.146px">Ein Bekannter hat mir Ihr Unternehmen empfohlen.</div>
<div class="doc" style="left:482.6px;top:408.2px;letter-spacing:0.411px">Ich suche eine 2-Zimmer-Wohnung mit Bad/Dusche und Küche. Die Wohnung</div>
<div class="doc" style="left:736.3px;top:431.1px;letter-spacing:0.125px">n Balkon haben und im Norden Münchens gelegen</div>
<div class="doc" style="right:551.7px;top:431.1px;white-space:pre">sollte möglichst eine</div>
<div class="doc" style="left:734px;top:454.0px;letter-spacing:0.154px">Verbindung in die Innenstadt existieren, damit ich</div>
<div class="doc" style="right:554px;top:454.0px;white-space:pre">sein. Es sollte eine gute </div>
<div class="doc" style="left:736.5px;top:476.9px;letter-spacing:0.083px">eitsstätte nicht unbedingt auf das Auto angewiesen</div>
<div class="doc" style="right:551.5px;top:476.9px;white-space:pre">zum Erreichen meiner Arb</div>
<div class="doc" style="left:482.6px;top:499.8px;letter-spacing:-0.248px">bin.</div>
<div class="doc" style="left:735.5px;top:545.7px;letter-spacing:-0.03px">agen über die von Ihnen angebotenen Objekte zu.</div>
<div class="doc" style="right:552.5px;top:545.7px;white-space:pre">Bitte senden Sie mir Unterl</div>
<div class="abs" style="left:1242px;top:165px;width:16px;height:457px;background:#ececec"></div>
<div class="raised" style="left:1242px;top:165px;width:16px;height:16px"></div>
<svg class="ic" style="left:1242px;top:165px" width="16" height="16" viewBox="0 0 16 16"><path d="M3.5 10 L7.5 5 L11.5 10 Z" fill="#000"/></svg>
<div class="raised" style="left:1242px;top:337px;width:16px;height:108px"></div>
<div class="raised" style="left:1242px;top:558px;width:16px;height:16px"></div>
<svg class="ic" style="left:1242px;top:558px" width="16" height="16" viewBox="0 0 16 16"><path d="M3.5 6 L11.5 6 L7.5 11 Z" fill="#000"/></svg>
<div class="raised" style="left:1242px;top:574px;width:16px;height:16px"></div>
<svg class="ic" style="left:1242px;top:574px" width="16" height="16" viewBox="0 0 16 16"><path d="M3.5 7 L7.5 3 L11.5 7 Z M3.5 12 L7.5 8 L11.5 12 Z" fill="#000"/></svg>
<div class="raised" style="left:1242px;top:590px;width:16px;height:16px"></div>
<svg class="ic" style="left:1242px;top:590px" width="16" height="16" viewBox="0 0 16 16"><circle cx="7.5" cy="8" r="2.6" fill="#909090"/><circle cx="6.8" cy="7.2" r="1.2" fill="#f0f0f0"/></svg>
<div class="raised" style="left:1242px;top:606px;width:16px;height:16px"></div>
<svg class="ic" style="left:1242px;top:606px" width="16" height="16" viewBox="0 0 16 16"><path d="M3.5 3.5 L11.5 3.5 L7.5 7.5 Z M3.5 8.5 L11.5 8.5 L7.5 12.5 Z" fill="#000"/></svg>
<div class="abs" style="left:458px;top:622px;width:784px;height:16px;background:#ececec"></div>
<div class="raised" style="left:700px;top:622px;width:406px;height:16px"></div>
<div class="raised" style="left:1226px;top:622px;width:16px;height:16px"></div>
<svg class="ic" style="left:1226px;top:622px" width="16" height="16" viewBox="0 0 16 16"><path d="M5.5 3.5 L10.5 7.5 L5.5 11.5 Z" fill="#000"/></svg>
<div class="abs" style="left:1242px;top:622px;width:16px;height:16px;background:#e0e0e0"></div>
<div class="abs" style="left:426px;top:638px;width:833px;height:2px;border-top:1px solid #9c9c9c;border-bottom:1px solid #fafafa"></div>
<div class="abs" style="left:600px;top:642px;width:172px;height:21px;border:1px solid;border-color:#a4a4a4 #f8f8f8 #f8f8f8 #a4a4a4;text-align:center;font:15.5px 'Liberation Serif',serif;line-height:20px;white-space:nowrap"></div>
<div class="abs" style="left:777px;top:642px;width:48px;height:21px;border:1px solid;border-color:#a4a4a4 #f8f8f8 #f8f8f8 #a4a4a4;text-align:center;font:15.5px 'Liberation Serif',serif;line-height:20px;white-space:nowrap">100%</div>
<div class="abs" style="left:829px;top:642px;width:50px;height:21px;border:1px solid;border-color:#a4a4a4 #f8f8f8 #f8f8f8 #a4a4a4;text-align:center;font:15.5px 'Liberation Serif',serif;line-height:20px;white-space:nowrap">EINFG</div>
<div class="abs" style="left:884px;top:642px;width:36px;height:21px;border:1px solid;border-color:#a4a4a4 #f8f8f8 #f8f8f8 #a4a4a4;text-align:center;font:15.5px 'Liberation Serif',serif;line-height:20px;white-space:nowrap">STD</div>
<div class="abs" style="left:925px;top:642px;width:30px;height:21px;border:1px solid;border-color:#a4a4a4 #f8f8f8 #f8f8f8 #a4a4a4;text-align:center;font:15.5px 'Liberation Serif',serif;line-height:20px;white-space:nowrap">HYP</div>
<div class="abs" style="left:960px;top:642px;width:9px;height:21px;border:1px solid;border-color:#a4a4a4 #f8f8f8 #f8f8f8 #a4a4a4;text-align:center;font:15.5px 'Liberation Serif',serif;line-height:20px;white-space:nowrap">*</div>
<div class="abs" style="left:974px;top:642px;width:280px;height:21px;border:1px solid;border-color:#a4a4a4 #f8f8f8 #f8f8f8 #a4a4a4;text-align:center;font:15.5px 'Liberation Serif',serif;line-height:20px;white-space:nowrap"></div>
<div class="win" style="left:65px;top:428px;width:671px;height:488px"></div>
<div class="tbar" style="left:68px;top:429px;width:665px;right:auto;height:18px"></div>
<div class="tbtn" style="left:72px;top:432px;background:radial-gradient(circle at 40% 35%,#90a0b8,#3c485c 65%,#182030)"></div><div class="abs" style="left:75px;top:438px;width:7px;height:2px;background:#d8e0f0"></div>
<div class="ttitle" style="left:333px;top:431px;width:122px;height:15px;line-height:15px;background:linear-gradient(#34406c,#5c6c9c 45%,#4c5c8c 70%,#2c3860);border-left:1px solid #c8d0e0;border-right:1px solid #202840;font-size:12.5px">Speichern unter</div>
<div class="abs" style="left:699px;top:429px;width:34px;height:18px;background:linear-gradient(#5a5a5a,#a0a0a0 35%,#8a8a8a 60%,#404040);border-left:1px solid #444"></div>
<div class="tbtn" style="left:701px;top:432px;width:14px;height:14px;background:radial-gradient(circle at 40% 35%,#90a0b8,#3c485c 65%,#182030)"></div>
<div class="tbtn" style="left:717px;top:432px;width:14px;height:14px;background:radial-gradient(circle at 40% 35%,#90a0b8,#3c485c 65%,#182030)"></div>
<svg class="ic" style="left:701px;top:432px" width="14" height="14" viewBox="0 0 14 14"><path d="M4.5 8.5 L7 5.5 L9.5 8.5 Z" fill="#d0d8f0"/></svg>
<svg class="ic" style="left:717px;top:432px" width="14" height="14" viewBox="0 0 14 14"><path d="M4.5 9.5 L9.5 4.5" fill="none" stroke="#c8d4f0" stroke-width="1.6"/></svg>
<div class="ui" style="left:82px;top:463px;letter-spacing:.4px">/home/rolf3/Documents</div>
<div class="raised" style="left:631px;top:461px;width:26px;height:26px"></div>
<svg class="ic" style="left:635px;top:465px" width="21" height="17" viewBox="0 0 21 17"><path d="M.5 3.5 L1.5 1.5 H5.5 L6.5 3.5 H14.5 V13.5 H.5 Z" fill="#f8f470" stroke="#000" stroke-width="1"/><path d="M3.5 6 V10.5 H11.5 M1.8 7.8 L3.5 5.5 L5.2 7.8" fill="none" stroke="#000" stroke-width="1.2"/><path d="M10.5 0 H18 L14.2 3.6 Z" fill="#30b050" stroke="#185028" stroke-width=".6"/></svg>
<div class="raised" style="left:664px;top:461px;width:26px;height:26px"></div>
<svg class="ic" style="left:668px;top:465px" width="21" height="17" viewBox="0 0 21 17"><path d="M.5 7.5 L1.5 5.5 H5 L6 7.5 H11.5 V15.5 H.5 Z" fill="#f8f470" stroke="#000"/><path d="M12 1 V10 M7.5 5.5 H16.5 M9 2.5 L15 8.5 M15 2.5 L9 8.5" stroke="#000" stroke-width=".8" stroke-dasharray="1.2 .8"/></svg>
<div class="raised" style="left:693px;top:461px;width:26px;height:26px"></div>
<svg class="ic" style="left:697px;top:465px" width="21" height="17" viewBox="0 0 21 17"><path d="M.5 3.5 L1.5 1.5 H6 L7 3.5 H15 V12.5 H.5 Z" fill="#f8f470" stroke="#000"/><path d="M9.5 5.5 L15 11.5" stroke="#102070" stroke-width="3.6" stroke-linecap="round"/><path d="M9.5 5.5 L15 11.5" stroke="#2850d8" stroke-width="2" stroke-linecap="round"/><path d="M4 8 L10 2.5 L12 5 L6.5 9.5 Z" fill="#a8c8d0" stroke="#405860" stroke-width=".7"/></svg>
<div class="sunk" style="left:83px;top:502px;width:636px;height:201px"></div>
<div class="abs" style="left:85px;top:504px;width:633px;height:22px;background:#e0e0e0"></div>
<div class="abs" style="left:85px;top:526px;width:633px;height:1px;background:#000"></div>
<div class="abs" style="left:263px;top:504px;width:1px;height:22px;background:#000"></div>
<div class="abs" style="left:264px;top:504px;width:1px;height:22px;background:#f8f8f8"></div>
<div class="abs" style="left:403px;top:504px;width:1px;height:22px;background:#000"></div>
<div class="abs" style="left:404px;top:504px;width:1px;height:22px;background:#f8f8f8"></div>
<div class="abs" style="left:483px;top:504px;width:1px;height:22px;background:#000"></div>
<div class="abs" style="left:484px;top:504px;width:1px;height:22px;background:#f8f8f8"></div>
<div class="ui" style="left:87px;top:506px">Titel</div>
<div class="ui" style="left:267px;top:506px">Typ</div>
<div class="ui" style="left:407px;top:506px">Größe</div>
<div class="ui" style="left:487px;top:506px">Änderungsdatum</div>
<svg class="ic" style="left:121px;top:509px" width="10" height="10" viewBox="0 0 10 10"><path d="M1 9 L5 1 L9 9 Z" fill="#e8e8e8" stroke="#b8b8b8" stroke-width="1"/></svg>
<div class="ui" style="left:82px;top:720px">Datei<u>n</u>ame:</div>
<div class="ui" style="left:82px;top:756px">Datei<u>t</u>yp:</div>
<div class="sunk" style="left:208px;top:717px;width:377px;height:26px"></div>
<div class="raised" style="left:568px;top:719px;width:15px;height:23px"></div>
<svg class="ic" style="left:571px;top:728px" width="9" height="5" viewBox="0 0 9 5"><path d="M0 0 H9 L4.5 5 Z" fill="#000"/></svg>
<div class="ui" style="left:211px;top:721px">Wohnen1</div>
<div class="sunk" style="left:208px;top:753px;width:377px;height:26px"></div>
<div class="raised" style="left:568px;top:755px;width:15px;height:23px"></div>
<svg class="ic" style="left:571px;top:764px" width="9" height="5" viewBox="0 0 9 5"><path d="M0 0 H9 L4.5 5 Z" fill="#000"/></svg>
<div class="ui" style="left:211px;top:757px">OpenOffice.org 1.0 Textdokument (.sxw)</div>
<div class="raised" style="left:600px;top:717px;width:119px;height:33px;border:1px solid #000;box-shadow:inset 1px 1px 0 #f8f8f8,inset -1px -1px 0 #000,inset -2px -2px 0 #808080;text-align:center;font:16px 'Liberation Serif',serif;line-height:32px"><u>S</u>peichern</div>
<div class="raised" style="left:600px;top:757px;width:119px;height:32px;text-align:center;font:16px 'Liberation Serif',serif;line-height:31px">Abbrechen</div>
<div class="raised" style="left:600px;top:801px;width:119px;height:32px;text-align:center;font:16px 'Liberation Serif',serif;line-height:31px"><u>H</u>ilfe</div>
<div class="abs" style="left:83px;top:850px;width:12px;height:12px;background:#fff;border:1px solid;border-color:#404040 #f8f8f8 #f8f8f8 #404040;box-shadow:inset 1px 1px 0 #000"></div>
<div class="abs" style="left:328px;top:850px;width:12px;height:12px;background:#fff;border:1px solid;border-color:#404040 #f8f8f8 #f8f8f8 #404040;box-shadow:inset 1px 1px 0 #000"></div>
<svg class="ic" style="left:330px;top:852px" width="9" height="9" viewBox="0 0 9 9"><path d="M1 3.5 L3.5 7 L8 1" fill="none" stroke="#000" stroke-width="1.8"/></svg>
<div class="abs" style="left:83px;top:880px;width:12px;height:12px;background:#e0e0e0;border:1px solid;border-color:#404040 #f8f8f8 #f8f8f8 #404040;box-shadow:inset 1px 1px 0 #000"></div>
<div class="ui" style="left:100px;top:846px"><u>M</u>it Kennwort speichern</div>
<div class="ui" style="left:345px;top:846px;letter-spacing:.12px">Automatische Dateinamens<u>e</u>rweiterung</div>
<div class="ui" style="left:100px;top:876px;color:#a0a0a0;text-shadow:1px 1px 0 #fff">Filtereinstellungen <u>b</u>earbeiten</div>
<div class="abs" style="left:0;top:978px;width:1280px;height:46px;background:linear-gradient(#ffffff 0,#ffffff 3%,#c8c4de 5%,#c0bcd8 30%,#aeaac8 70%,#9c98b6 94%,#585864 97%,#34343c 100%)"></div>
<svg class="ic" style="left:2px;top:982px" width="8" height="4" viewBox="0 0 8 4"><path d="M0 4 L4 0 L8 4 Z" fill="#000"/></svg>
<svg class="ic" style="left:4px;top:981px" width="40" height="40" viewBox="0 0 40 40"><g fill="#ececf2" stroke="#74747e" stroke-width="1"><rect x="15.5" y="5.2" width="6" height="6.8" rx="1" transform="rotate(22 18.5 19)"/><rect x="15.5" y="5.2" width="6" height="6.8" rx="1" transform="rotate(67 18.5 19)"/><rect x="15.5" y="5.2" width="6" height="6.8" rx="1" transform="rotate(112 18.5 19)"/><rect x="15.5" y="5.2" width="6" height="6.8" rx="1" transform="rotate(157 18.5 19)"/><rect x="15.5" y="5.2" width="6" height="6.8" rx="1" transform="rotate(202 18.5 19)"/><rect x="15.5" y="5.2" width="6" height="6.8" rx="1" transform="rotate(247 18.5 19)"/><rect x="15.5" y="5.2" width="6" height="6.8" rx="1" transform="rotate(292 18.5 19)"/><rect x="15.5" y="5.2" width="6" height="6.8" rx="1" transform="rotate(337 18.5 19)"/><circle cx="18.5" cy="19" r="10"/></g><circle cx="18.5" cy="19" r="9.2" fill="#ececf2"/><circle cx="18.5" cy="19" r="7" fill="#dcb080"/><circle cx="17" cy="17.5" r="4" fill="#f4dcc0"/><text x="12.5" y="24.3" font-family="Liberation Sans" font-weight="bold" font-size="29.5" fill="#fff" stroke="#484852" stroke-width="2.8" stroke-linejoin="round">K</text><text x="12.5" y="24.3" font-family="Liberation Sans" font-weight="bold" font-size="29.5" fill="#fff" stroke="#fff" stroke-width="1">K</text></svg>
<svg class="ic" style="left:49px;top:988px" width="33" height="25" viewBox="0 0 33 25"><path d="M1 8 L4 5 L3 9 L6 7 Q10 1 18 1.5 Q24 2 27 6 L32 9 L31.5 15 L27 16.5 L20 15.5 L24 19 L20 20 L17 24 L10 23.5 L7 19 L2 17 L4 15 L1 14 L4 12 L1 11 L4 10 Z" fill="#e43414" stroke="#300804" stroke-width="1.1"/><path d="M19 12.5 L30 12 M11 6 Q15 4 19 7 M9 14 Q12 17 16 14 M13 10 l3 1.5 M22 5.5 l2.5 2 M27 16 v-2.5 M24.5 15.8 v-2.3 M22 15.5 v-2" stroke="#300804" stroke-width="1.1" fill="none"/><circle cx="21.5" cy="8.5" r="1.3" fill="#180000"/></svg>
<svg class="ic" style="left:92px;top:981px" width="40" height="42" viewBox="0 0 40 42"><g fill="#ececf2" stroke="#74747e" stroke-width="1"><rect x="15.5" y="6.5" width="6" height="6.5" rx="1" transform="rotate(22 18.5 19.5)"/><rect x="15.5" y="6.5" width="6" height="6.5" rx="1" transform="rotate(67 18.5 19.5)"/><rect x="15.5" y="6.5" width="6" height="6.5" rx="1" transform="rotate(112 18.5 19.5)"/><rect x="15.5" y="6.5" width="6" height="6.5" rx="1" transform="rotate(157 18.5 19.5)"/><rect x="15.5" y="6.5" width="6" height="6.5" rx="1" transform="rotate(202 18.5 19.5)"/><rect x="15.5" y="6.5" width="6" height="6.5" rx="1" transform="rotate(247 18.5 19.5)"/><rect x="15.5" y="6.5" width="6" height="6.5" rx="1" transform="rotate(292 18.5 19.5)"/><rect x="15.5" y="6.5" width="6" height="6.5" rx="1" transform="rotate(337 18.5 19.5)"/><circle cx="18.5" cy="19.5" r="9.5"/></g><circle cx="18.5" cy="19.5" r="8.7" fill="#ececf2"/><path d="M27 27 L33 35" stroke="#9c9ca8" stroke-width="2"/><circle cx="20.7" cy="16.5" r="10.8" fill="#2c6cc8" stroke="#183c78" stroke-width=".8"/><path d="M14 9 Q19 6 23 9 Q24 14 20 15 Q17 15 17 19 Q19 24 22 26 Q15 26 12 20 Q10 14 14 9 Z" fill="#c8b458"/><path d="M26 13 Q30 15 30 20 Q28 24 25 22 Q24 17 26 13 Z" fill="#b8a850"/><ellipse cx="17" cy="10.5" rx="4.5" ry="2.5" fill="#fff" opacity=".5"/><path d="M12 22 Q20 30 30 22 Q26 28 20.7 27.3 Q15 27 12 22Z" fill="#102850" opacity=".5"/></svg>
<svg class="ic" style="left:146px;top:985px" width="33" height="33" viewBox="0 0 33 33"><defs><linearGradient id="og2" x1="0" y1="0" x2="0" y2="1"><stop offset="0" stop-color="#f8fcff"/><stop offset=".3" stop-color="#c8e4f8"/><stop offset=".45" stop-color="#38a0e0"/><stop offset=".62" stop-color="#78c4f0"/><stop offset=".75" stop-color="#2c98dc"/><stop offset="1" stop-color="#d8ecfc"/></linearGradient></defs><rect width="33" height="33" fill="url(#og2)"/><rect y="18" width="33" height="1.5" fill="#e8f4ff" opacity=".8"/><rect y="25" width="33" height="1.2" fill="#e8f4ff" opacity=".7"/><path d="M14 12 Q18 7 23 8 Q27 3 32 4 Q28 5 25 10 Q20 9 14 12 Z" fill="#101010"/><path d="M1 28 Q5 19 13 19 Q18 12 26 12 Q20 14 16 22 Q8 21 1 28 Z" fill="#101010"/></svg>
<svg class="ic" style="left:247px;top:984px" width="29" height="33" viewBox="0 0 29 33"><path d="M3 2 H25 Q27 2 27 4 V27 L24 31 H4 Q2 31 2 29 V3 Z" fill="#a4a49c" stroke="#3c3c38" stroke-width="1"/><rect x="5" y="5" width="18" height="19" fill="#283830" stroke="#181c18"/><path d="M8 9 L11 12 L8 15" fill="none" stroke="#40e060" stroke-width="1.5"/><rect x="12" y="14" width="4" height="1.4" fill="#40e060"/><path d="M27 4 V27 L24 31 V6 Z" fill="#5c5c58"/></svg>
<svg class="ic" style="left:287px;top:984px" width="34" height="34" viewBox="0 0 34 34"><circle cx="17" cy="17" r="15.5" fill="none" stroke="#404040" stroke-width="1" stroke-dasharray="2 1.5"/><circle cx="17" cy="17" r="11" fill="none" stroke="#503030" stroke-width="9"/><circle cx="17" cy="17" r="11" fill="none" stroke="#f4f4f4" stroke-width="7.5"/><circle cx="17" cy="17" r="11" fill="none" stroke="#d83028" stroke-width="7.5" stroke-dasharray="8.64 8.64" stroke-dashoffset="4.3"/><circle cx="17" cy="17" r="7.2" fill="#38a838" stroke="#205020" stroke-width=".8"/><path d="M12 17 Q17 12 22 16 Q20 21 15 20" fill="none" stroke="#c8f0c8" stroke-width="1.3"/></svg>
<svg class="ic" style="left:328px;top:984px" width="36" height="34" viewBox="0 0 36 34"><path d="M8 14 L20 3 L34 12 L24 26 Z" fill="#e8eef4" stroke="#708090" stroke-width=".8"/><path d="M5 16 L17 6 L33 17 L20 30 Z" fill="#3878ac" stroke="#1c4870" stroke-width=".8"/><path d="M10 22 L24 12 L35 20 L22 32 Z" fill="#5c9cd0" stroke="#285888" stroke-width=".8"/><path d="M1 24 L10 15 L19 24 V33 H3 V24 Z" fill="#f8f8f0" stroke="#303030" stroke-width="1"/><path d="M0 25 L10 14.5 L20 25" fill="none" stroke="#a03020" stroke-width="1.8"/><rect x="8" y="26" width="5" height="7" fill="#b06020" stroke="#402000" stroke-width=".6"/></svg>
<svg class="ic" style="left:367px;top:982px" width="8" height="4" viewBox="0 0 8 4"><path d="M0 4 L4 0 L8 4 Z" fill="#000"/></svg>
<svg class="ic" style="left:376px;top:984px" width="30" height="34" viewBox="0 0 30 34"><path d="M3 1 H19 L27 9 V33 H3 Z" fill="#f8f8f4" stroke="#606060" stroke-width="1"/><path d="M19 1 V9 H27" fill="#d8d8d0" stroke="#606060" stroke-width=".8"/><path d="M7 8 H15 M7 12 H22 M7 15 H22 M7 18 H18" stroke="#9098a0" stroke-width="1.2"/><rect x="9" y="22" width="14" height="8" fill="#f0e8d8" stroke="#b08060" stroke-width=".8"/><path d="M9 26 H23 M14 22 V30" stroke="#b08060" stroke-width=".8"/><circle cx="3" cy="10" r="1.5" fill="#fff" stroke="#505050" stroke-width=".7"/><circle cx="3" cy="24" r="1.5" fill="#fff" stroke="#505050" stroke-width=".7"/></svg>
<svg class="ic" style="left:435px;top:986px" width="38" height="32" viewBox="0 0 38 32"><path d="M2 23 L18 16 L36 22 L20 30 Z" fill="#3c78ac" stroke="#1c4870" stroke-width="1"/><path d="M2 23 L20 30 V32 L2 25 Z" fill="#1c4870"/><circle cx="3" cy="23.5" r="2.3" fill="#f0d020" stroke="#806000" stroke-width=".5"/><circle cx="20" cy="30" r="2.3" fill="#f0d020" stroke="#806000" stroke-width=".5"/><circle cx="35" cy="22" r="2.3" fill="#f0d020" stroke="#806000" stroke-width=".5"/><circle cx="18" cy="16" r="2" fill="#f0d020" stroke="#806000" stroke-width=".5"/><path d="M15 25 L17 20 L30 5 L34 8 L21 23 Z" fill="#e87830" stroke="#703010" stroke-width=".8"/><path d="M15 25 L17 20 L21 23 Z" fill="#f0d8b0" stroke="#703010" stroke-width=".6"/><path d="M30 5 L34 8 L32 10.5 L28 7.5 Z" fill="#d04040"/></svg>
<div class="abs" style="left:476px;top:982px;width:6px;height:38px;background:repeating-linear-gradient(90deg,#f4f4fa 0,#f4f4fa 1px,#a4a2bc 1px,#a4a2bc 2px,#d0cee0 2px,#d0cee0 3px)"></div>
<svg class="ic" style="left:476px;top:981px" width="6" height="3" viewBox="0 0 6 3"><path d="M0 3 L3 0 L6 3 Z" fill="#000"/></svg>
<div class="abs" style="left:485px;top:981px;width:9px;height:40px;background:linear-gradient(90deg,#d4d2e6,#9896b4)"></div>
<svg class="ic" style="left:486px;top:983px" width="7" height="4" viewBox="0 0 7 4"><path d="M0 4 L3.5 0 L7 4 Z" fill="#000"/></svg>
<div class="abs" style="left:495px;top:980px;width:53px;height:42px;background:#000"></div>
<div class="abs" style="left:497px;top:981px;width:25px;height:20px;background:#f8f8f8;border:1px solid #000"></div>
<div class="abs" style="left:506px;top:984px;width:13px;height:10px;background:#d8d8e0;border:1px solid #606060"></div>
<div class="abs" style="left:500px;top:990px;width:13px;height:9px;background:#2060a0;border:1px solid #103060"></div>
<div class="abs" style="left:523px;top:981px;width:24px;height:19px;background:#444444;color:#f0f0f0;text-align:center;font:13px 'Liberation Sans',sans-serif;line-height:19px">2</div>
<div class="abs" style="left:497px;top:1002px;width:24px;height:19px;background:#444444;color:#f0f0f0;text-align:center;font:13px 'Liberation Sans',sans-serif;line-height:19px">3</div>
<div class="abs" style="left:523px;top:1002px;width:24px;height:19px;background:#444444;color:#f0f0f0;text-align:center;font:13px 'Liberation Sans',sans-serif;line-height:19px">4</div>
<div class="abs" style="left:549px;top:982px;width:6px;height:38px;background:repeating-linear-gradient(90deg,#f4f4fa 0,#f4f4fa 1px,#a4a2bc 1px,#a4a2bc 2px,#d0cee0 2px,#d0cee0 3px)"></div>
<svg class="ic" style="left:549px;top:981px" width="6" height="3" viewBox="0 0 6 3"><path d="M0 3 L3 0 L6 3 Z" fill="#000"/></svg>
<div class="abs" style="left:558px;top:981px;width:9px;height:40px;background:linear-gradient(90deg,#d4d2e6,#9896b4)"></div>
<svg class="ic" style="left:559px;top:983px" width="7" height="4" viewBox="0 0 7 4"><path d="M0 4 L3.5 0 L7 4 Z" fill="#000"/></svg>
<div class="abs" style="left:568px;top:980px;width:201px;height:21px;background:linear-gradient(#fcfcfe,#e4e4ec 60%,#d4d4e0);border:1px solid #505058;border-top-color:#fff"></div>
<div class="abs" style="left:568px;top:1001px;width:201px;height:20px;background:linear-gradient(#fcfcfe,#f0f0f6 60%,#e0e0ea);border:1px solid #000"></div>
<svg class="ic" style="left:572px;top:983px" width="18" height="17" viewBox="0 0 18 17"><path d="M5 1 H13 L17 5 V16 H5 Z" fill="#f0e8e8" stroke="#b0a0a0" stroke-width=".8"/><circle cx="6" cy="10" r="4.5" fill="#c8d8e8" stroke="#a0a8b8" stroke-width=".8"/><path d="M3 12 L8 6 L11 9 L7 14 Z" fill="#e8b0a0" opacity=".8"/></svg>
<div class="abs" style="left:592px;top:982px;font:12.5px 'Liberation Sans',sans-serif;line-height:18px;color:#8c8c8c;white-space:nowrap">Konqueror</div>
<svg class="ic" style="left:574px;top:1003px" width="15" height="17" viewBox="0 0 15 17"><rect x="1.5" y=".5" width="12" height="15.5" fill="#fff" stroke="#000"/><path d="M3.5 4 H9 M3.5 6.5 H11 M3.5 9 H8 M3.5 11.5 H11 M3.5 13.5 H9" stroke="#2020c0" stroke-width="1.2"/><rect x="9.5" y="2.5" width="2.5" height="2.5" fill="#fff" stroke="#000" stroke-width=".6"/></svg>
<div class="abs" style="left:592px;top:1002px;width:166px;overflow:hidden;letter-spacing:-.1px;font:12.5px 'Liberation Sans',sans-serif;line-height:18px;color:#000;white-space:nowrap">OpenOffice.org 1.1Beta_deutsch</div>
<div class="abs" style="left:746px;top:1003px;width:14px;height:16px;background:linear-gradient(90deg,rgba(240,240,246,0),#f0f0f6)"></div>
<svg class="ic" style="left:755px;top:988px" width="9" height="5" viewBox="0 0 9 5"><path d="M0 5 L4.5 0 L9 5 Z" fill="#000"/></svg>
<svg class="ic" style="left:755px;top:1008px" width="9" height="5" viewBox="0 0 9 5"><path d="M0 5 L4.5 0 L9 5 Z" fill="#000"/></svg>
<div class="abs" style="left:770px;top:980px;width:303px;height:42px;border-top:1px solid #5c5c6c;border-bottom:1px solid #f4f4fa"></div>
<div class="abs" style="left:1074px;top:982px;width:6px;height:38px;background:repeating-linear-gradient(90deg,#f4f4fa 0,#f4f4fa 1px,#a4a2bc 1px,#a4a2bc 2px,#d0cee0 2px,#d0cee0 3px)"></div>
<svg class="ic" style="left:1074px;top:981px" width="6" height="3" viewBox="0 0 6 3"><path d="M0 3 L3 0 L6 3 Z" fill="#000"/></svg>
<div class="abs" style="left:1081px;top:981px;width:23px;height:40px;background:linear-gradient(#b8b8c8,#a0a0b0 50%,#b0b0c0)"></div>
<svg class="ic" style="left:1081px;top:988px" width="24" height="26" viewBox="0 0 24 26"><rect x="8" y="1" width="13" height="21" fill="#38a048" stroke="#185020" stroke-width=".8"/><rect x="9" y="2" width="3" height="19" fill="#90d098"/><rect x="3" y="13" width="9" height="9" fill="#fff" stroke="#404040" stroke-width=".8"/><path d="M15 14 v4 M18 14 v4" stroke="#d0f0d0" stroke-width="1.4"/><path d="M1 9 L6 14 L15 3" fill="none" stroke="#c89010" stroke-width="3"/><path d="M1 9 L6 14 L15 3" fill="none" stroke="#403000" stroke-width=".6" transform="translate(0,2)"/></svg>
<div class="abs" style="left:1105px;top:982px;width:6px;height:38px;background:repeating-linear-gradient(90deg,#f4f4fa 0,#f4f4fa 1px,#a4a2bc 1px,#a4a2bc 2px,#d0cee0 2px,#d0cee0 3px)"></div>
<svg class="ic" style="left:1105px;top:981px" width="6" height="3" viewBox="0 0 6 3"><path d="M0 3 L3 0 L6 3 Z" fill="#000"/></svg>
<div class="abs" style="left:1111px;top:980px;width:30px;height:21px;background:#e8e8f0;border:1px solid #000"></div>
<div class="abs" style="left:1111px;top:1001px;width:30px;height:21px;background:#e8e8f0;border:1px solid #000"></div>
<div class="abs" style="left:1118px;top:982px;width:17px;height:17px;background:#3c98d0;border:1px solid #1c5888;border-radius:3px"></div>
<svg class="ic" style="left:1118px;top:982px" width="17" height="17" viewBox="0 0 17 17"><path d="M5.5 8 V5.5 Q5.5 3 8.5 3 Q11.5 3 11.5 5.5 V8" fill="none" stroke="#f0f8ff" stroke-width="1.6"/><rect x="4.5" y="8" width="8" height="5.5" fill="#f0f8ff"/></svg>
<div class="abs" style="left:1118px;top:1003px;width:17px;height:17px;background:#e07050;border:1px solid #903820;border-radius:3px"></div>
<svg class="ic" style="left:1118px;top:1003px" width="17" height="17" viewBox="0 0 17 17"><circle cx="8.5" cy="8.5" r="5" fill="none" stroke="#fff0e8" stroke-width="1.6"/><rect x="7.7" y="5" width="1.7" height="7" fill="#fff0e8"/></svg>
<div class="abs" style="left:1142px;top:982px;width:6px;height:38px;background:repeating-linear-gradient(90deg,#f4f4fa 0,#f4f4fa 1px,#a4a2bc 1px,#a4a2bc 2px,#d0cee0 2px,#d0cee0 3px)"></div>
<svg class="ic" style="left:1142px;top:981px" width="6" height="3" viewBox="0 0 6 3"><path d="M0 3 L3 0 L6 3 Z" fill="#000"/></svg>
<div class="abs" style="left:1149px;top:981px;width:75px;height:40px;background:linear-gradient(#c8c6de 0,#c0bed6 25%,#9c9cac 32%,#a8a8b8 50%,#9c9cac 68%,#b4b2cc 75%,#aeacc8 100%)"></div>
<svg class="ic" style="left:1151px;top:990px" width="22" height="22" viewBox="0 0 22 22"><path d="M2 20 L8 13" stroke="#f0f0f0" stroke-width="2.4"/><path d="M2 20 L8 13" stroke="#404040" stroke-width=".6" transform="translate(1,1)"/><path d="M6 11 L10 7 L15 12 L11 16 Q8 16 6 11 Z" fill="#e8e8e8" stroke="#404040" stroke-width=".8"/><path d="M11 6.5 L15 2 M15 10.5 L19.5 6" stroke="#d8d820" stroke-width="2"/></svg>
<svg class="ic" style="left:1177px;top:989px" width="21" height="24" viewBox="0 0 21 24"><rect x="1.5" y="3.5" width="17" height="19" rx="2" fill="#e89040" stroke="#603010" stroke-width="1"/><rect x="4.5" y="6" width="11" height="14" fill="#fff" stroke="#404040" stroke-width=".6"/><rect x="6" y="1" width="8" height="4.5" rx="1" fill="#c0c0c0" stroke="#404040" stroke-width=".8"/><path d="M6.5 8.5 H13.5" stroke="#000" stroke-width="1"/><text x="6.3" y="18.5" font-family="Liberation Sans" font-weight="bold" font-size="9.5" fill="#000">K</text></svg>
<svg class="ic" style="left:1200px;top:989px" width="22" height="26" viewBox="0 0 22 26"><path d="M3 9 H8 L16 2 Q21 13 16 24 L8 17 H3 Z" fill="#48a8e0" stroke="#205888" stroke-width="1"/><ellipse cx="12" cy="13" rx="4" ry="6" fill="#e0e0e0" stroke="#808080" stroke-width=".6"/><ellipse cx="11" cy="12" rx="2" ry="3.5" fill="#fff"/></svg>
<div class="abs" style="left:1225px;top:982px;width:6px;height:38px;background:repeating-linear-gradient(90deg,#f4f4fa 0,#f4f4fa 1px,#a4a2bc 1px,#a4a2bc 2px,#d0cee0 2px,#d0cee0 3px)"></div>
<svg class="ic" style="left:1225px;top:981px" width="6" height="3" viewBox="0 0 6 3"><path d="M0 3 L3 0 L6 3 Z" fill="#000"/></svg>
<div class="abs" style="left:1233px;top:981px;width:43px;height:40px;background:repeating-linear-gradient(#d0d0c4 0,#d0d0c4 1px,#bcbcb0 1px,#bcbcb0 2px)"></div>
<svg class="ic" style="left:0;top:0" width="1280" height="1024" viewBox="0 0 1280 1024"><path d="M1254.5 986.0 L1254.5 982.0" stroke="#000" stroke-width="1.4"/><path d="M1262.0 988.0 L1264.0 984.5" stroke="#000" stroke-width="0.8"/><path d="M1267.5 993.5 L1271.0 991.5" stroke="#000" stroke-width="0.8"/><path d="M1269.5 1001.0 L1273.5 1001.0" stroke="#000" stroke-width="1.4"/><path d="M1267.5 1008.5 L1271.0 1010.5" stroke="#000" stroke-width="0.8"/><path d="M1262.0 1014.0 L1264.0 1017.5" stroke="#000" stroke-width="0.8"/><path d="M1254.5 1016.0 L1254.5 1020.0" stroke="#000" stroke-width="1.4"/><path d="M1247.0 1014.0 L1245.0 1017.5" stroke="#000" stroke-width="0.8"/><path d="M1241.5 1008.5 L1238.0 1010.5" stroke="#000" stroke-width="0.8"/><path d="M1239.5 1001.0 L1235.5 1001.0" stroke="#000" stroke-width="1.4"/><path d="M1241.5 993.5 L1238.0 991.5" stroke="#000" stroke-width="0.8"/><path d="M1247.0 988.0 L1245.0 984.5" stroke="#000" stroke-width="0.8"/><path d="M1254.5 1001 L1263.5 1004" stroke="#000" stroke-width="2.4"/><path d="M1254.5 1001 L1238.5 1009" stroke="#000" stroke-width="1.4"/><path d="M1254.5 1001 L1246.5 1016" stroke="#303030" stroke-width=".9"/></svg>
</div>
</body>
</html>
